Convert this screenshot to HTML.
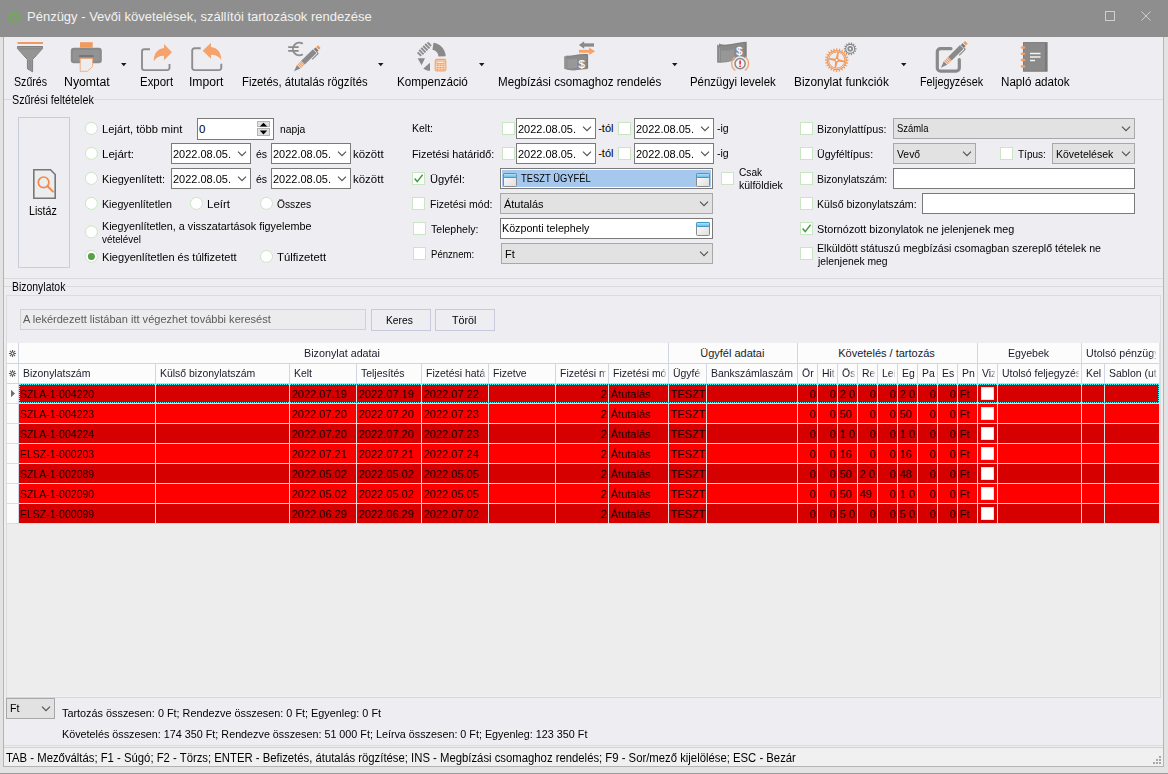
<!DOCTYPE html>
<html><head><meta charset="utf-8"><style>
html,body{margin:0;padding:0;width:1168px;height:774px;overflow:hidden;background:#eeeef2;}
body{position:relative;font-family:"Liberation Sans", sans-serif;}
.t{position:absolute;white-space:nowrap;font-family:"Liberation Sans", sans-serif;}
</style></head><body>
<div style="position:absolute;left:0px;top:0px;width:1168px;height:774px;background:#e3e3e3"></div>
<div style="position:absolute;left:0px;top:0px;width:1168px;height:37px;background:#8e8e8e"></div>
<div style="position:absolute;left:3px;top:37px;width:1161px;height:730px;background:#b4b4b4"></div>
<div style="position:absolute;left:4px;top:37px;width:1159px;height:729px;background:#eeeef2"></div>
<div style="position:absolute;left:0px;top:773px;width:1168px;height:1px;background:#9a9a9a"></div>
<svg style="position:absolute;left:4px;top:6px" width="24" height="22" viewBox="4 6 24 22"><g fill="#6cb04a"><circle cx="12.7" cy="11.4" r="0.95"/><circle cx="15.7" cy="11.4" r="0.95"/><circle cx="8.1" cy="18.5" r="1"/><circle cx="20.1" cy="18.5" r="1"/><circle cx="9.5" cy="21.3" r="0.95"/><circle cx="18.6" cy="21.3" r="0.95"/></g><g stroke="#6cb04a" stroke-width="1.3" fill="none" stroke-linecap="round"><path d="M9.8 13.3Q14.2 16.8 18.5 13.2"/><path d="M8.4 15.4Q12.4 16.6 12.4 19.5V22.3"/><path d="M19.8 15.4Q15.6 16.6 15.6 19.5V22.3"/></g></svg>
<div class="t" style="left:27px;top:8.50px;font-size:13px;line-height:16px;color:#f2f2f2;transform:scaleX(1.0);transform-origin:0 0;">Pénzügy - Vevői követelések, szállítói tartozások rendezése</div>
<div style="position:absolute;left:1105px;top:11px;width:10px;height:10px;border:1px solid #cfcfcf;box-sizing:border-box"></div>
<svg style="position:absolute;left:1141px;top:11px" width="10" height="10"><path d="M0.5 0.5L9.5 9.5M9.5 0.5L0.5 9.5" stroke="#cfcfcf" stroke-width="1"/></svg>
<svg style="position:absolute;left:0px;top:36px" width="60" height="40" viewBox="0 36 60 40"><rect x="17.5" y="42" width="25.5" height="2" fill="#f09a5e"/>
<path d="M17.5 46.5H42.5V48.6L32.6 59.5V71.8L27.4 68.8V59.5L17.5 48.6Z" fill="#959595" stroke="#808080" stroke-width="1"/>
<path d="M19 48.8H41" stroke="#858585" stroke-width="0.9"/><path d="M30 60V69.5" stroke="#858585" stroke-width="0.8"/></svg>
<div class="t" style="left:14.2px;top:74.84px;font-size:12px;line-height:14px;color:#000;transform:scaleX(0.8838);transform-origin:0 0;">Szűrés</div>
<svg style="position:absolute;left:60px;top:36px" width="60" height="40" viewBox="60 36 60 40"><rect x="80" y="42.2" width="12.7" height="5.4" fill="#f09a5e"/>
<rect x="70.8" y="47.8" width="31" height="15.4" rx="3" fill="#8a8a8a"/>
<rect x="73" y="50" width="26.5" height="11" rx="1.5" fill="#939393"/>
<rect x="79" y="55" width="14.5" height="2" fill="#777"/>
<path d="M80.2 58.4H92.6V66.5L87.4 71.3H80.2Z" fill="#ededf0" stroke="#f2a474" stroke-width="0.85"/></svg>
<div class="t" style="left:63.7px;top:74.84px;font-size:12px;line-height:14px;color:#000;transform:scaleX(1.0244);transform-origin:0 0;">Nyomtat</div>
<svg style="position:absolute;left:121px;top:63px" width="6" height="4" viewBox="0 0 6 4"><path d="M0 0H5.5L2.75 3.2Z" fill="#1a1a1a"/></svg>
<svg style="position:absolute;left:130px;top:36px" width="50" height="40" viewBox="130 36 50 40"><path d="M150 49.3H144.3A2.3 2.3 0 0 0 142 51.6V67.8A2.3 2.3 0 0 0 144.3 70.1H167.2A2.3 2.3 0 0 0 169.5 67.8V64" fill="none" stroke="#8e8e8e" stroke-width="1.9"/>
<path d="M153.8 61.3C153.8 53.5 157.5 48.6 164 48V44L172 52.3L164 60.3V55.8C159.5 55.8 156.3 57.5 153.8 61.3Z" fill="#f5a36a"/></svg>
<div class="t" style="left:139.5px;top:74.84px;font-size:12px;line-height:14px;color:#000;transform:scaleX(0.9543);transform-origin:0 0;">Export</div>
<svg style="position:absolute;left:180px;top:36px" width="50" height="40" viewBox="180 36 50 40"><path d="M200.7 48.3H194.5A2.3 2.3 0 0 0 192.2 50.6V67.8A2.3 2.3 0 0 0 194.5 70.1H219A2.3 2.3 0 0 0 221.3 67.8V63.7" fill="none" stroke="#8e8e8e" stroke-width="1.9"/>
<path d="M221.3 60C221.3 52.5 217.5 47.6 211 47V42.8L202.7 50.8L211 58.8V54.8C215.5 54.8 218.8 56.4 221.3 60Z" fill="#f5a36a"/></svg>
<div class="t" style="left:189.4px;top:74.84px;font-size:12px;line-height:14px;color:#000;transform:scaleX(1.0114);transform-origin:0 0;">Import</div>
<svg style="position:absolute;left:280px;top:36px" width="50" height="40" viewBox="280 36 50 40"><path d="M302.8 43.8A6.3 6.3 0 1 0 302.8 54.2" fill="none" stroke="#8e8e8e" stroke-width="1.9"/>
<path d="M288.2 47.1H298.7M288.2 50.9H298.7" stroke="#8a8a8a" stroke-width="1.9"/><path d="M294.00 71.30L296.95 64.94L300.44 68.53Z" fill="#8a8a8a"/><path d="M297.45 64.32L298.31 63.49L301.93 67.22L301.08 68.05Z" fill="#f09a5e"/><path d="M298.73 63.07L299.59 62.24L303.21 65.97L302.36 66.80Z" fill="#f09a5e"/><path d="M300.01 61.83L300.87 61.00L304.49 64.73L303.64 65.56Z" fill="#f09a5e"/><path d="M301.15 60.72L312.96 49.25L316.59 52.97L304.78 64.45Z" fill="#8a8a8a"/><path d="M313.81 49.12L315.59 47.39L318.51 50.40L316.74 52.13Z" fill="#7a7a7a"/><path d="M316.15 47.12L318.00 45.32L320.65 48.05L318.80 49.85Z" fill="#f09a5e"/><path d="M312.15 59.37L317.84 53.84L317.51 52.08" fill="none" stroke="#8a8a8a" stroke-width="1.2"/></svg>
<div class="t" style="left:241.5px;top:74.84px;font-size:12px;line-height:14px;color:#000;transform:scaleX(0.9421);transform-origin:0 0;">Fizetés, átutalás rögzítés</div>
<svg style="position:absolute;left:378px;top:63px" width="6" height="4" viewBox="0 0 6 4"><path d="M0 0H5.5L2.75 3.2Z" fill="#1a1a1a"/></svg>
<svg style="position:absolute;left:410px;top:36px" width="50" height="40" viewBox="410 36 50 40"><g transform="translate(0.6 0.6) rotate(-45 423.8 48.5)"><rect x="415.80" y="46.0" width="1.9" height="5.0" fill="#8c8c8c"/><rect x="418.60" y="45.4" width="1.9" height="6.2" fill="#8c8c8c"/><rect x="421.40" y="45.4" width="1.9" height="6.2" fill="#8c8c8c"/><rect x="424.20" y="45.4" width="1.9" height="6.2" fill="#8c8c8c"/><rect x="427.00" y="45.4" width="1.9" height="6.2" fill="#8c8c8c"/><rect x="429.80" y="46.0" width="1.9" height="5.0" fill="#8c8c8c"/></g>
<path d="M433.48 42.64A14.2 14.2 0 0 1 445.69 56.20L438.50 56.46A7.0 7.0 0 0 0 432.47 49.77Z" fill="#8a8a8a"/>
<path d="M417.6 58.2H425L421.6 65.2Z" fill="#8a8a8a"/>
<path d="M430 62.8V70.8C427.5 70.6 425.3 69.8 423.3 68.4Z" fill="#8a8a8a"/>
<rect x="435.2" y="59.4" width="10.6" height="11.6" rx="1.6" fill="#fbd9c0" stroke="#f4a36c" stroke-width="1.1"/>
<rect x="436.9" y="61.1" width="7.2" height="2.4" fill="#fdeee2" stroke="#f4a36c" stroke-width="0.9"/>
<g fill="#f39a5c"><rect x="436.6" y="64.6" width="2" height="1.3"/><rect x="439.5" y="64.6" width="2" height="1.3"/><rect x="442.4" y="64.6" width="2" height="1.3"/>
<rect x="436.6" y="67" width="2" height="1.3"/><rect x="439.5" y="67" width="2" height="1.3"/><rect x="442.4" y="67" width="2" height="1.3"/>
<rect x="436.6" y="69.2" width="2" height="1.1"/><rect x="439.5" y="69.2" width="2" height="1.1"/><rect x="442.4" y="69.2" width="2" height="1.1"/></g></svg>
<div class="t" style="left:396.6px;top:74.84px;font-size:12px;line-height:14px;color:#000;transform:scaleX(0.974);transform-origin:0 0;">Kompenzáció</div>
<svg style="position:absolute;left:479px;top:63px" width="6" height="4" viewBox="0 0 6 4"><path d="M0 0H5.5L2.75 3.2Z" fill="#1a1a1a"/></svg>
<svg style="position:absolute;left:555px;top:36px" width="50" height="40" viewBox="555 36 50 40"><path d="M594 45H583" stroke="#8a8a8a" stroke-width="3.3"/><path d="M584.2 41.3L578.9 45L584.2 48.7Z" fill="#8a8a8a"/>
<path d="M579 51.3H590" stroke="#f5a36a" stroke-width="2.9"/><path d="M589.2 47.5L595.1 51.3L589.2 55Z" fill="#f5a36a"/>
<path d="M566 55.5C571 57 577 53.2 588.1 54.3V68.8C581 68.2 575 71.3 566 69Z" fill="#7e7e7e"/>
<path d="M564.2 56C569 57.8 576 54.2 586.5 55.5V69.4C579 68.8 574 72.5 564.2 68.8Z" fill="#8a8a8a"/>
<path d="M567.5 59C571 59.8 574 58.8 577 58.5V67.5C574 67.8 571 69 567.5 68Z" fill="#989898"/>
<path d="M566 58.5V68.5" stroke="#a0a0a0" stroke-width="0.8"/>
<text x="581.6" y="67.6" font-family="Liberation Sans" font-size="11.5" fill="#fff" stroke="#fff" stroke-width="0.2" text-anchor="middle">$</text></svg>
<div class="t" style="left:497.7px;top:74.84px;font-size:12px;line-height:14px;color:#000;transform:scaleX(0.9675);transform-origin:0 0;">Megbízási csomaghoz rendelés</div>
<svg style="position:absolute;left:672px;top:63px" width="6" height="4" viewBox="0 0 6 4"><path d="M0 0H5.5L2.75 3.2Z" fill="#1a1a1a"/></svg>
<svg style="position:absolute;left:710px;top:36px" width="50" height="40" viewBox="710 36 50 40"><path d="M719 43.5C725 46.5 733 43 746.7 41.8V57.5C736 58 727 62 719 61Z" fill="#7e7e7e"/>
<path d="M717.1 44.5C723 48 731 44.5 744.6 43.2V59C734 59.5 726 63.8 717.1 62.5Z" fill="#8a8a8a"/>
<path d="M721 50C726 51.5 730 50 734 49.2V60C730 60.5 726 62 721 61.5Z" fill="#979797"/>
<path d="M719.5 48V61" stroke="#a2a2a2" stroke-width="0.8"/>
<text x="739.2" y="55.2" font-family="Liberation Sans" font-size="11" fill="#fff" stroke="#fff" stroke-width="0.3" text-anchor="middle">$</text>
<circle cx="740.1" cy="63.6" r="7.3" fill="#eeeef2"/>
<path d="M744.9 56.7A8.4 8.4 0 0 1 744.9 70.5M735.3 70.5A8.4 8.4 0 0 1 735.3 56.7" fill="none" stroke="#f5a36a" stroke-width="1.3"/>
<circle cx="740.1" cy="63.6" r="5.1" fill="#f2f2f4" stroke="#8a8a8a" stroke-width="1.5"/>
<path d="M740.1 60.4V64.6" stroke="#e0203a" stroke-width="1.5"/><rect x="739.35" y="65.6" width="1.5" height="1.4" fill="#e0203a"/></svg>
<div class="t" style="left:690.4px;top:74.84px;font-size:12px;line-height:14px;color:#000;transform:scaleX(0.9516);transform-origin:0 0;">Pénzügyi levelek</div>
<svg style="position:absolute;left:820px;top:36px" width="50" height="40" viewBox="820 36 50 40"><path d="M848.48 59.48L848.48 60.72L846.67 60.88L846.48 62.18L848.24 62.55L847.92 63.75L846.13 63.44L845.61 64.64L847.21 65.46L846.60 66.53L844.94 65.76L844.13 66.79L845.47 68.00L844.60 68.87L843.19 67.70L842.15 68.49L843.13 70.00L842.06 70.61L841.01 69.13L839.79 69.61L840.35 71.32L839.15 71.64L838.52 69.93L837.22 70.09L837.32 71.88L836.08 71.88L835.92 70.07L834.62 69.88L834.25 71.64L833.05 71.32L833.36 69.53L832.16 69.01L831.34 70.61L830.27 70.00L831.04 68.34L830.01 67.53L828.80 68.87L827.93 68.00L829.10 66.59L828.31 65.55L826.80 66.53L826.19 65.46L827.67 64.41L827.19 63.19L825.48 63.75L825.16 62.55L826.87 61.92L826.71 60.62L824.92 60.72L824.92 59.48L826.73 59.32L826.92 58.02L825.16 57.65L825.48 56.45L827.27 56.76L827.79 55.56L826.19 54.74L826.80 53.67L828.46 54.44L829.27 53.41L827.93 52.20L828.80 51.33L830.21 52.50L831.25 51.71L830.27 50.20L831.34 49.59L832.39 51.07L833.61 50.59L833.05 48.88L834.25 48.56L834.88 50.27L836.18 50.11L836.08 48.32L837.32 48.32L837.48 50.13L838.78 50.32L839.15 48.56L840.35 48.88L840.04 50.67L841.24 51.19L842.06 49.59L843.13 50.20L842.36 51.86L843.39 52.67L844.60 51.33L845.47 52.20L844.30 53.61L845.09 54.65L846.60 53.67L847.21 54.74L845.73 55.79L846.21 57.01L847.92 56.45L848.24 57.65L846.53 58.28L846.69 59.58Z" fill="#f09a5e"/>
<circle cx="836.7" cy="60.1" r="8.9" fill="#eeeef2"/>
<circle cx="836.7" cy="60.1" r="8.1" fill="none" stroke="#f09a5e" stroke-width="1"/>
<path d="M-1.3 -1 L-0.7 -8 L0.7 -8 L1.3 -1Z" fill="#f09a5e" transform="translate(836.7 60.1) rotate(10)"/><path d="M-1.3 -1 L-0.7 -8 L0.7 -8 L1.3 -1Z" fill="#f09a5e" transform="translate(836.7 60.1) rotate(100)"/><path d="M-1.3 -1 L-0.7 -8 L0.7 -8 L1.3 -1Z" fill="#f09a5e" transform="translate(836.7 60.1) rotate(190)"/><path d="M-1.3 -1 L-0.7 -8 L0.7 -8 L1.3 -1Z" fill="#f09a5e" transform="translate(836.7 60.1) rotate(280)"/><circle cx="836.7" cy="60.1" r="2.2" fill="#f09a5e"/>
<circle cx="836.7" cy="60.1" r="1.1" fill="#fff"/>
<path d="M856.57 48.20L856.57 49.40L855.16 49.45L854.89 50.54L856.20 51.02L855.68 52.11L854.39 51.54L853.67 52.40L854.64 53.41L853.70 54.16L852.78 53.08L851.77 53.55L852.21 54.88L851.03 55.15L850.67 53.78L849.55 53.76L849.37 55.15L848.19 54.88L848.46 53.49L847.46 52.99L846.70 54.16L845.76 53.41L846.60 52.27L845.92 51.38L844.72 52.11L844.20 51.02L845.45 50.37L845.22 49.27L843.83 49.40L843.83 48.20L845.24 48.15L845.51 47.06L844.20 46.58L844.72 45.49L846.01 46.06L846.73 45.20L845.76 44.19L846.70 43.44L847.62 44.52L848.63 44.05L848.19 42.72L849.37 42.45L849.73 43.82L850.85 43.84L851.03 42.45L852.21 42.72L851.94 44.11L852.94 44.61L853.70 43.44L854.64 44.19L853.80 45.33L854.48 46.22L855.68 45.49L856.20 46.58L854.95 47.23L855.18 48.33Z" fill="#8a8a8a"/>
<circle cx="850.2" cy="48.8" r="3.9" fill="#eeeef2"/><circle cx="850.2" cy="48.8" r="2.8" fill="#8a8a8a"/><rect x="849.3" y="47.9" width="1.8" height="1.8" fill="#fff"/></svg>
<div class="t" style="left:793.9px;top:74.84px;font-size:12px;line-height:14px;color:#000;transform:scaleX(0.9876);transform-origin:0 0;">Bizonylat funkciók</div>
<svg style="position:absolute;left:901px;top:63px" width="6" height="4" viewBox="0 0 6 4"><path d="M0 0H5.5L2.75 3.2Z" fill="#1a1a1a"/></svg>
<svg style="position:absolute;left:925px;top:36px" width="50" height="40" viewBox="925 36 50 40"><path d="M951 48.7H940.5A3.2 3.2 0 0 0 937.3 51.9V67.9A3.2 3.2 0 0 0 940.5 71.1H956.1A3.2 3.2 0 0 0 959.3 67.9V59.6" fill="none" stroke="#8a8a8a" stroke-width="3.2" stroke-linecap="round"/><path d="M940.80 67.70L943.79 61.23L947.31 64.78Z" fill="#8a8a8a"/><path d="M944.30 60.59L945.16 59.73L948.82 63.43L947.96 64.28Z" fill="#f09a5e"/><path d="M945.60 59.31L946.46 58.45L950.12 62.15L949.25 63.00Z" fill="#f09a5e"/><path d="M946.89 58.02L947.76 57.17L951.41 60.87L950.55 61.72Z" fill="#f09a5e"/><path d="M948.04 56.89L960.00 45.08L963.65 48.78L951.70 60.59Z" fill="#8a8a8a"/><path d="M960.85 44.93L962.65 43.16L965.60 46.14L963.80 47.92Z" fill="#7a7a7a"/><path d="M963.22 42.87L965.10 41.02L967.77 43.72L965.90 45.57Z" fill="#f09a5e"/><path d="M959.16 55.32L964.92 49.63L964.59 47.85" fill="none" stroke="#8a8a8a" stroke-width="1.2"/></svg>
<div class="t" style="left:919.5px;top:74.84px;font-size:12px;line-height:14px;color:#000;transform:scaleX(0.9014);transform-origin:0 0;">Feljegyzések</div>
<svg style="position:absolute;left:1015px;top:36px" width="40" height="40" viewBox="1015 36 40 40"><rect x="1023.5" y="42.6" width="23.6" height="28.6" fill="#8a8a8a" stroke="#7c7c7c" stroke-width="1"/>
<rect x="1045" y="43" width="1.6" height="28" fill="#777"/>
<path d="M1030 53.5H1040.5M1030 57H1040.5M1030 60.5H1035" stroke="#f4f4f4" stroke-width="1.4"/>
<g fill="#f6a060"><ellipse cx="1023" cy="47.6" rx="2.4" ry="1.3"/><ellipse cx="1023" cy="53.8" rx="2.4" ry="1.3"/><ellipse cx="1023" cy="60.1" rx="2.4" ry="1.3"/><ellipse cx="1023" cy="66.4" rx="2.4" ry="1.3"/></g></svg>
<div class="t" style="left:1001.0px;top:74.84px;font-size:12px;line-height:14px;color:#000;transform:scaleX(0.9694);transform-origin:0 0;">Napló adatok</div>
<div style="position:absolute;left:4px;top:99px;width:1159px;height:1px;background:#dadada"></div>
<div class="t" style="left:11.6px;top:92.84px;font-size:12px;line-height:14px;color:#000;transform:scaleX(0.8946);transform-origin:0 0;background:#eeeef2;">Szűrési feltételek</div>
<div style="position:absolute;left:18px;top:117px;width:52px;height:151px;border:1px solid #c9cddb;box-sizing:border-box"></div>
<svg style="position:absolute;left:30px;top:166px" width="30" height="36" viewBox="30 166 30 36">
<path d="M33.8 169.8H50.5L55.2 174.5V198.2H33.8Z" fill="#ededf0" stroke="#777" stroke-width="1.6"/>
<circle cx="43.6" cy="182.3" r="5.3" fill="none" stroke="#f08a4b" stroke-width="1.7"/>
<path d="M47.6 186.3L53 191.6" stroke="#f08a4b" stroke-width="2" stroke-linecap="round"/>
</svg>
<div class="t" style="left:29.3px;top:203.84px;font-size:12px;line-height:14px;color:#000;transform:scaleX(0.8871);transform-origin:0 0;">Listáz</div>
<svg style="position:absolute;left:84px;top:121px" width="14" height="14" viewBox="0 0 14 14"><circle cx="7.40" cy="7.40" r="6" fill="#fff" stroke="#c9e5c3" stroke-width="1"/></svg>
<svg style="position:absolute;left:84px;top:146px" width="14" height="14" viewBox="0 0 14 14"><circle cx="7.40" cy="7.40" r="6" fill="#fff" stroke="#c9e5c3" stroke-width="1"/></svg>
<svg style="position:absolute;left:84px;top:171px" width="14" height="14" viewBox="0 0 14 14"><circle cx="7.40" cy="7.40" r="6" fill="#fff" stroke="#c9e5c3" stroke-width="1"/></svg>
<svg style="position:absolute;left:84px;top:196px" width="14" height="14" viewBox="0 0 14 14"><circle cx="7.40" cy="7.40" r="6" fill="#fff" stroke="#c9e5c3" stroke-width="1"/></svg>
<svg style="position:absolute;left:84px;top:224px" width="14" height="14" viewBox="0 0 14 14"><circle cx="7.40" cy="7.90" r="6" fill="#fff" stroke="#c9e5c3" stroke-width="1"/></svg>
<svg style="position:absolute;left:84px;top:249px" width="14" height="14" viewBox="0 0 14 14"><circle cx="7.40" cy="7.40" r="6" fill="#fff" stroke="#c9e5c3" stroke-width="1"/><circle cx="7.40" cy="7.40" r="3.5" fill="#55a247"/></svg>
<div class="t" style="left:102.3px;top:122.69px;font-size:11px;line-height:13px;color:#000;transform:scaleX(1.0177);transform-origin:0 0;">Lejárt, több mint</div>
<div class="t" style="left:102.3px;top:147.69px;font-size:11px;line-height:13px;color:#000;transform:scaleX(1.0484);transform-origin:0 0;">Lejárt:</div>
<div class="t" style="left:102.3px;top:172.69px;font-size:11px;line-height:13px;color:#000;transform:scaleX(0.9922);transform-origin:0 0;">Kiegyenlített:</div>
<div class="t" style="left:102.3px;top:197.69px;font-size:11px;line-height:13px;color:#000;transform:scaleX(0.9681);transform-origin:0 0;">Kiegyenlítetlen</div>
<div class="t" style="left:102.3px;top:219.69px;font-size:11px;line-height:13px;color:#000;transform:scaleX(0.9813);transform-origin:0 0;">Kiegyenlítetlen, a visszatartások figyelembe</div>
<div class="t" style="left:102.3px;top:232.69px;font-size:11px;line-height:13px;color:#000;transform:scaleX(0.8953);transform-origin:0 0;">vételével</div>
<div class="t" style="left:102.3px;top:250.69px;font-size:11px;line-height:13px;color:#000;transform:scaleX(1.0052);transform-origin:0 0;">Kiegyenlítetlen és túlfizetett</div>
<svg style="position:absolute;left:189px;top:196px" width="14" height="14" viewBox="0 0 14 14"><circle cx="7.40" cy="7.40" r="6" fill="#fff" stroke="#c9e5c3" stroke-width="1"/></svg>
<div class="t" style="left:207.4px;top:197.69px;font-size:11px;line-height:13px;color:#000;transform:scaleX(1.0455);transform-origin:0 0;">Leírt</div>
<svg style="position:absolute;left:259px;top:196px" width="14" height="14" viewBox="0 0 14 14"><circle cx="7.50" cy="7.40" r="6" fill="#fff" stroke="#c9e5c3" stroke-width="1"/></svg>
<div class="t" style="left:277.1px;top:197.69px;font-size:11px;line-height:13px;color:#000;transform:scaleX(0.9324);transform-origin:0 0;">Összes</div>
<svg style="position:absolute;left:259px;top:249px" width="14" height="14" viewBox="0 0 14 14"><circle cx="7.50" cy="7.40" r="6" fill="#fff" stroke="#c9e5c3" stroke-width="1"/></svg>
<div class="t" style="left:277.1px;top:250.69px;font-size:11px;line-height:13px;color:#000;transform:scaleX(1.0292);transform-origin:0 0;">Túlfizetett</div>
<div style="position:absolute;left:197px;top:118px;width:77px;height:22px;background:#fff;border:1px solid #7a7a7a;box-sizing:border-box"></div>
<div class="t" style="left:199px;top:122.02px;font-size:11.5px;line-height:14px;color:#000;">0</div>
<svg style="position:absolute;left:256px;top:120px" width="16" height="18" viewBox="256 120 16 18">
<rect x="257.5" y="121.5" width="12" height="5" fill="#e1e1e1" stroke="#b4b4b4" stroke-width="1"/>
<rect x="257.5" y="128.5" width="12" height="7" fill="#e1e1e1" stroke="#b4b4b4" stroke-width="1"/>
<path d="M259.8 126.6H267.2L263.5 122.8Z" fill="#000"/>
<path d="M259.8 130.6H267.2L263.5 134.4Z" fill="#000"/>
</svg>
<div class="t" style="left:279.7px;top:122.69px;font-size:11px;line-height:13px;color:#000;transform:scaleX(0.9393);transform-origin:0 0;">napja</div>
<div style="position:absolute;left:171px;top:143px;width:80px;height:21px;background:#fff;border:1px solid #7a7a7a;box-sizing:border-box"></div>
<div class="t" style="left:173.3px;top:147.02px;font-size:11.5px;line-height:14px;color:#000;transform:scaleX(0.9541);transform-origin:0 0;">2022.08.05.</div>
<svg style="position:absolute;left:237px;top:150px" width="10" height="8" viewBox="0 0 10 8"><path d="M1 1.6L5 5.6L9 1.6" fill="none" stroke="#505050" stroke-width="1.1"/></svg>
<div style="position:absolute;left:271px;top:143px;width:80px;height:21px;background:#fff;border:1px solid #7a7a7a;box-sizing:border-box"></div>
<div class="t" style="left:273.3px;top:147.02px;font-size:11.5px;line-height:14px;color:#000;transform:scaleX(0.9541);transform-origin:0 0;">2022.08.05.</div>
<svg style="position:absolute;left:337px;top:150px" width="10" height="8" viewBox="0 0 10 8"><path d="M1 1.6L5 5.6L9 1.6" fill="none" stroke="#505050" stroke-width="1.1"/></svg>
<div style="position:absolute;left:171px;top:168px;width:80px;height:21px;background:#fff;border:1px solid #7a7a7a;box-sizing:border-box"></div>
<div class="t" style="left:173.3px;top:172.02px;font-size:11.5px;line-height:14px;color:#000;transform:scaleX(0.9541);transform-origin:0 0;">2022.08.05.</div>
<svg style="position:absolute;left:237px;top:175px" width="10" height="8" viewBox="0 0 10 8"><path d="M1 1.6L5 5.6L9 1.6" fill="none" stroke="#505050" stroke-width="1.1"/></svg>
<div style="position:absolute;left:271px;top:168px;width:80px;height:21px;background:#fff;border:1px solid #7a7a7a;box-sizing:border-box"></div>
<div class="t" style="left:273.3px;top:172.02px;font-size:11.5px;line-height:14px;color:#000;transform:scaleX(0.9541);transform-origin:0 0;">2022.08.05.</div>
<svg style="position:absolute;left:337px;top:175px" width="10" height="8" viewBox="0 0 10 8"><path d="M1 1.6L5 5.6L9 1.6" fill="none" stroke="#505050" stroke-width="1.1"/></svg>
<div class="t" style="left:255.5px;top:147.69px;font-size:11px;line-height:13px;color:#000;transform:scaleX(0.9583);transform-origin:0 0;">és</div>
<div class="t" style="left:255.5px;top:172.69px;font-size:11px;line-height:13px;color:#000;transform:scaleX(0.9583);transform-origin:0 0;">és</div>
<div class="t" style="left:353.4px;top:147.69px;font-size:11px;line-height:13px;color:#000;transform:scaleX(1.0414);transform-origin:0 0;">között</div>
<div class="t" style="left:353.4px;top:172.69px;font-size:11px;line-height:13px;color:#000;transform:scaleX(1.0414);transform-origin:0 0;">között</div>
<div class="t" style="left:411.5px;top:121.69px;font-size:11px;line-height:13px;color:#000;transform:scaleX(0.9545);transform-origin:0 0;">Kelt:</div>
<div class="t" style="left:411.5px;top:147.69px;font-size:11px;line-height:13px;color:#000;transform:scaleX(0.9821);transform-origin:0 0;">Fizetési határidő:</div>
<svg style="position:absolute;left:502px;top:122px" width="13" height="13" viewBox="0 0 13 13"><rect x="0.5" y="0.5" width="12" height="12" fill="#fff" stroke="#c9e5c3" stroke-width="1"/></svg>
<svg style="position:absolute;left:502px;top:147px" width="13" height="13" viewBox="0 0 13 13"><rect x="0.5" y="0.5" width="12" height="12" fill="#fff" stroke="#c9e5c3" stroke-width="1"/></svg>
<div style="position:absolute;left:516px;top:118px;width:80px;height:21px;background:#fff;border:1px solid #7a7a7a;box-sizing:border-box"></div>
<div class="t" style="left:518.3px;top:122.02px;font-size:11.5px;line-height:14px;color:#000;transform:scaleX(0.9541);transform-origin:0 0;">2022.08.05.</div>
<svg style="position:absolute;left:582px;top:125px" width="10" height="8" viewBox="0 0 10 8"><path d="M1 1.6L5 5.6L9 1.6" fill="none" stroke="#505050" stroke-width="1.1"/></svg>
<div style="position:absolute;left:516px;top:143px;width:80px;height:21px;background:#fff;border:1px solid #7a7a7a;box-sizing:border-box"></div>
<div class="t" style="left:518.3px;top:147.02px;font-size:11.5px;line-height:14px;color:#000;transform:scaleX(0.9541);transform-origin:0 0;">2022.08.05.</div>
<svg style="position:absolute;left:582px;top:150px" width="10" height="8" viewBox="0 0 10 8"><path d="M1 1.6L5 5.6L9 1.6" fill="none" stroke="#505050" stroke-width="1.1"/></svg>
<div class="t" style="left:598.2px;top:121.69px;font-size:11px;line-height:13px;color:#000;transform:scaleX(1.0);transform-origin:0 0;">-tól</div>
<div class="t" style="left:598.2px;top:146.69px;font-size:11px;line-height:13px;color:#000;transform:scaleX(1.0);transform-origin:0 0;">-tól</div>
<svg style="position:absolute;left:618px;top:122px" width="13" height="13" viewBox="0 0 13 13"><rect x="0.5" y="0.5" width="12" height="12" fill="#fff" stroke="#c9e5c3" stroke-width="1"/></svg>
<svg style="position:absolute;left:618px;top:147px" width="13" height="13" viewBox="0 0 13 13"><rect x="0.5" y="0.5" width="12" height="12" fill="#fff" stroke="#c9e5c3" stroke-width="1"/></svg>
<div style="position:absolute;left:634px;top:118px;width:80px;height:21px;background:#fff;border:1px solid #7a7a7a;box-sizing:border-box"></div>
<div class="t" style="left:636.3px;top:122.02px;font-size:11.5px;line-height:14px;color:#000;transform:scaleX(0.9541);transform-origin:0 0;">2022.08.05.</div>
<svg style="position:absolute;left:700px;top:125px" width="10" height="8" viewBox="0 0 10 8"><path d="M1 1.6L5 5.6L9 1.6" fill="none" stroke="#505050" stroke-width="1.1"/></svg>
<div style="position:absolute;left:634px;top:143px;width:80px;height:21px;background:#fff;border:1px solid #7a7a7a;box-sizing:border-box"></div>
<div class="t" style="left:636.3px;top:147.02px;font-size:11.5px;line-height:14px;color:#000;transform:scaleX(0.9541);transform-origin:0 0;">2022.08.05.</div>
<svg style="position:absolute;left:700px;top:150px" width="10" height="8" viewBox="0 0 10 8"><path d="M1 1.6L5 5.6L9 1.6" fill="none" stroke="#505050" stroke-width="1.1"/></svg>
<div class="t" style="left:717.0px;top:121.69px;font-size:11px;line-height:13px;color:#000;transform:scaleX(0.9583);transform-origin:0 0;">-ig</div>
<div class="t" style="left:717.0px;top:146.69px;font-size:11px;line-height:13px;color:#000;transform:scaleX(0.9583);transform-origin:0 0;">-ig</div>
<svg style="position:absolute;left:412px;top:172px" width="13" height="13" viewBox="0 0 13 13"><rect x="0.5" y="0.5" width="12" height="12" fill="#fff" stroke="#c9e5c3" stroke-width="1"/><path d="M2.6 6.6L5.2 9.6L10.6 2.8" fill="none" stroke="#3f9f3f" stroke-width="1.5"/></svg>
<div class="t" style="left:429.5px;top:172.69px;font-size:11px;line-height:13px;color:#000;transform:scaleX(1.0147);transform-origin:0 0;">Ügyfél:</div>
<div style="position:absolute;left:500px;top:168px;width:213px;height:21px;background:#fff;border:1px solid #7a7a7a;box-sizing:border-box"></div>
<div style="position:absolute;left:502px;top:170px;width:209px;height:17px;background:#a6c8ee"></div>
<svg style="position:absolute;left:503px;top:173px" width="14" height="14" viewBox="0 0 14 14">
<defs><linearGradient id="wg503" x1="0" y1="0" x2="1" y2="1"><stop offset="0" stop-color="#ffffff"/><stop offset="1" stop-color="#dedede"/></linearGradient>
<linearGradient id="wt503" x1="0" y1="0" x2="0" y2="1"><stop offset="0" stop-color="#bfe8fb"/><stop offset="1" stop-color="#62b6e6"/></linearGradient></defs>
<rect x="0.5" y="0.5" width="13" height="13" rx="1" fill="url(#wg503)" stroke="#8a8a8a" stroke-width="1"/>
<rect x="0.5" y="0.5" width="13" height="4" rx="1" fill="url(#wt503)" stroke="#3e9ac7" stroke-width="1"/>
</svg>
<div class="t" style="left:520.5px;top:171.69px;font-size:11px;line-height:13px;color:#000;transform:scaleX(0.8537);transform-origin:0 0;">TESZT ÜGYFÉL</div>
<svg style="position:absolute;left:696px;top:173px" width="14" height="14" viewBox="0 0 14 14">
<defs><linearGradient id="wg696" x1="0" y1="0" x2="1" y2="1"><stop offset="0" stop-color="#ffffff"/><stop offset="1" stop-color="#dedede"/></linearGradient>
<linearGradient id="wt696" x1="0" y1="0" x2="0" y2="1"><stop offset="0" stop-color="#bfe8fb"/><stop offset="1" stop-color="#62b6e6"/></linearGradient></defs>
<rect x="0.5" y="0.5" width="13" height="13" rx="1" fill="url(#wg696)" stroke="#8a8a8a" stroke-width="1"/>
<rect x="0.5" y="0.5" width="13" height="4" rx="1" fill="url(#wt696)" stroke="#3e9ac7" stroke-width="1"/>
</svg>
<svg style="position:absolute;left:721px;top:172px" width="13" height="13" viewBox="0 0 13 13"><rect x="0.5" y="0.5" width="12" height="12" fill="#fff" stroke="#c9e5c3" stroke-width="1"/></svg>
<div class="t" style="left:738.6px;top:165.69px;font-size:11px;line-height:13px;color:#000;transform:scaleX(0.9231);transform-origin:0 0;">Csak</div>
<div class="t" style="left:738.6px;top:178.69px;font-size:11px;line-height:13px;color:#000;transform:scaleX(0.9565);transform-origin:0 0;">külföldiek</div>
<svg style="position:absolute;left:412px;top:197px" width="13" height="13" viewBox="0 0 13 13"><rect x="0.5" y="0.5" width="12" height="12" fill="#fff" stroke="#c9e5c3" stroke-width="1"/></svg>
<div class="t" style="left:429.5px;top:197.69px;font-size:11px;line-height:13px;color:#000;transform:scaleX(0.9538);transform-origin:0 0;">Fizetési mód:</div>
<div style="position:absolute;left:500px;top:193px;width:213px;height:21px;background:#e2e2e2;border:1px solid #a8a8a8;box-sizing:border-box"></div>
<div class="t" style="left:503.5px;top:197.02px;font-size:11.5px;line-height:14px;color:#000;transform:scaleX(0.9524);transform-origin:0 0;">Átutalás</div>
<svg style="position:absolute;left:699px;top:200px" width="10" height="8" viewBox="0 0 10 8"><path d="M1 1.6L5 5.6L9 1.6" fill="none" stroke="#505050" stroke-width="1.1"/></svg>
<svg style="position:absolute;left:413px;top:222px" width="13" height="13" viewBox="0 0 13 13"><rect x="0.5" y="0.5" width="12" height="12" fill="#fff" stroke="#c9e5c3" stroke-width="1"/></svg>
<div class="t" style="left:430.8px;top:222.69px;font-size:11px;line-height:13px;color:#000;transform:scaleX(0.96);transform-origin:0 0;">Telephely:</div>
<div style="position:absolute;left:500px;top:218px;width:213px;height:21px;background:#fff;border:1px solid #7a7a7a;box-sizing:border-box"></div>
<div class="t" style="left:502.4px;top:221.69px;font-size:11px;line-height:13px;color:#000;transform:scaleX(0.9722);transform-origin:0 0;">Központi telephely</div>
<svg style="position:absolute;left:696px;top:222px" width="14" height="14" viewBox="0 0 14 14">
<defs><linearGradient id="wg696" x1="0" y1="0" x2="1" y2="1"><stop offset="0" stop-color="#ffffff"/><stop offset="1" stop-color="#dedede"/></linearGradient>
<linearGradient id="wt696" x1="0" y1="0" x2="0" y2="1"><stop offset="0" stop-color="#bfe8fb"/><stop offset="1" stop-color="#62b6e6"/></linearGradient></defs>
<rect x="0.5" y="0.5" width="13" height="13" rx="1" fill="url(#wg696)" stroke="#8a8a8a" stroke-width="1"/>
<rect x="0.5" y="0.5" width="13" height="4" rx="1" fill="url(#wt696)" stroke="#3e9ac7" stroke-width="1"/>
</svg>
<svg style="position:absolute;left:413px;top:247px" width="13" height="13" viewBox="0 0 13 13"><rect x="0.5" y="0.5" width="12" height="12" fill="#fff" stroke="#c9e5c3" stroke-width="1"/></svg>
<div class="t" style="left:430.8px;top:247.69px;font-size:11px;line-height:13px;color:#000;transform:scaleX(0.87);transform-origin:0 0;">Pénznem:</div>
<div style="position:absolute;left:501px;top:243px;width:212px;height:21px;background:#e2e2e2;border:1px solid #a8a8a8;box-sizing:border-box"></div>
<div class="t" style="left:504.5px;top:247.02px;font-size:11.5px;line-height:14px;color:#000;transform:scaleX(0.9545);transform-origin:0 0;">Ft</div>
<svg style="position:absolute;left:699px;top:250px" width="10" height="8" viewBox="0 0 10 8"><path d="M1 1.6L5 5.6L9 1.6" fill="none" stroke="#505050" stroke-width="1.1"/></svg>
<svg style="position:absolute;left:800px;top:122px" width="13" height="13" viewBox="0 0 13 13"><rect x="0.5" y="0.5" width="12" height="12" fill="#fff" stroke="#c9e5c3" stroke-width="1"/></svg>
<svg style="position:absolute;left:800px;top:147px" width="13" height="13" viewBox="0 0 13 13"><rect x="0.5" y="0.5" width="12" height="12" fill="#fff" stroke="#c9e5c3" stroke-width="1"/></svg>
<svg style="position:absolute;left:800px;top:172px" width="13" height="13" viewBox="0 0 13 13"><rect x="0.5" y="0.5" width="12" height="12" fill="#fff" stroke="#c9e5c3" stroke-width="1"/></svg>
<svg style="position:absolute;left:800px;top:197px" width="13" height="13" viewBox="0 0 13 13"><rect x="0.5" y="0.5" width="12" height="12" fill="#fff" stroke="#c9e5c3" stroke-width="1"/></svg>
<svg style="position:absolute;left:800px;top:222px" width="13" height="13" viewBox="0 0 13 13"><rect x="0.5" y="0.5" width="12" height="12" fill="#fff" stroke="#c9e5c3" stroke-width="1"/><path d="M2.6 6.6L5.2 9.6L10.6 2.8" fill="none" stroke="#3f9f3f" stroke-width="1.5"/></svg>
<svg style="position:absolute;left:800px;top:247px" width="13" height="13" viewBox="0 0 13 13"><rect x="0.5" y="0.5" width="12" height="12" fill="#fff" stroke="#c9e5c3" stroke-width="1"/></svg>
<div class="t" style="left:817.4px;top:122.69px;font-size:11px;line-height:13px;color:#000;transform:scaleX(0.9722);transform-origin:0 0;">Bizonylattípus:</div>
<div style="position:absolute;left:893px;top:118px;width:242px;height:21px;background:#e2e2e2;border:1px solid #a8a8a8;box-sizing:border-box"></div>
<div class="t" style="left:896.5px;top:121.02px;font-size:11.5px;line-height:14px;color:#000;transform:scaleX(0.8205);transform-origin:0 0;">Számla</div>
<svg style="position:absolute;left:1121px;top:125px" width="10" height="8" viewBox="0 0 10 8"><path d="M1 1.6L5 5.6L9 1.6" fill="none" stroke="#505050" stroke-width="1.1"/></svg>
<div class="t" style="left:817.4px;top:147.69px;font-size:11px;line-height:13px;color:#000;transform:scaleX(0.9655);transform-origin:0 0;">Ügyféltípus:</div>
<div style="position:absolute;left:893px;top:143px;width:83px;height:21px;background:#e2e2e2;border:1px solid #a8a8a8;box-sizing:border-box"></div>
<div class="t" style="left:896.5px;top:147.02px;font-size:11.5px;line-height:14px;color:#000;transform:scaleX(0.9038);transform-origin:0 0;">Vevő</div>
<svg style="position:absolute;left:962px;top:150px" width="10" height="8" viewBox="0 0 10 8"><path d="M1 1.6L5 5.6L9 1.6" fill="none" stroke="#505050" stroke-width="1.1"/></svg>
<svg style="position:absolute;left:1000px;top:147px" width="13" height="13" viewBox="0 0 13 13"><rect x="0.5" y="0.5" width="12" height="12" fill="#fff" stroke="#c9e5c3" stroke-width="1"/></svg>
<div class="t" style="left:1017.8px;top:147.69px;font-size:11px;line-height:13px;color:#000;transform:scaleX(0.9097);transform-origin:0 0;">Típus:</div>
<div style="position:absolute;left:1052px;top:143px;width:83px;height:21px;background:#e2e2e2;border:1px solid #a8a8a8;box-sizing:border-box"></div>
<div class="t" style="left:1055.5px;top:147.02px;font-size:11.5px;line-height:14px;color:#000;transform:scaleX(0.9141);transform-origin:0 0;">Követelések</div>
<svg style="position:absolute;left:1121px;top:150px" width="10" height="8" viewBox="0 0 10 8"><path d="M1 1.6L5 5.6L9 1.6" fill="none" stroke="#505050" stroke-width="1.1"/></svg>
<div class="t" style="left:817.4px;top:172.69px;font-size:11px;line-height:13px;color:#000;transform:scaleX(0.95);transform-origin:0 0;">Bizonylatszám:</div>
<div style="position:absolute;left:893px;top:168px;width:242px;height:21px;background:#fff;border:1px solid #7a7a7a;box-sizing:border-box"></div>
<div class="t" style="left:817.4px;top:197.69px;font-size:11px;line-height:13px;color:#000;transform:scaleX(0.9641);transform-origin:0 0;">Külső bizonylatszám:</div>
<div style="position:absolute;left:922px;top:193px;width:213px;height:21px;background:#fff;border:1px solid #7a7a7a;box-sizing:border-box"></div>
<div class="t" style="left:817.4px;top:222.69px;font-size:11px;line-height:13px;color:#000;transform:scaleX(0.9841);transform-origin:0 0;">Stornózott bizonylatok ne jelenjenek meg</div>
<div class="t" style="left:817.4px;top:241.69px;font-size:11px;line-height:13px;color:#000;transform:scaleX(0.9634);transform-origin:0 0;">Elküldött státuszú megbízási csomagban szereplő tételek ne</div>
<div class="t" style="left:818.34px;top:254.69px;font-size:11px;line-height:13px;color:#000;transform:scaleX(0.94);transform-origin:0 0;">jelenjenek meg</div>
<div style="position:absolute;left:4px;top:278px;width:1159px;height:1px;background:#dadada"></div>
<div style="position:absolute;left:4px;top:286px;width:1159px;height:1px;background:#dadada"></div>
<div class="t" style="left:11.5px;top:279.84px;font-size:12px;line-height:14px;color:#000;transform:scaleX(0.8694);transform-origin:0 0;background:#eeeef2;">Bizonylatok</div>
<div style="position:absolute;left:6px;top:295px;width:1155px;height:403px;border-left:1px solid #dcdcdc;border-top:1px solid #dcdcdc;border-right:1px solid #dcdcdc;box-sizing:border-box"></div>
<div style="position:absolute;left:20px;top:309px;width:346px;height:21px;background:#ececee;border:1px solid #d2d2d2;box-sizing:border-box"></div>
<div class="t" style="left:22.8px;top:312.69px;font-size:11px;line-height:13px;color:#5a5a5a;transform:scaleX(1.0032);transform-origin:0 0;">A lekérdezett listában itt végezhet további keresést</div>
<div style="position:absolute;left:371px;top:309px;width:60px;height:22px;background:#eeeef2;border:1px solid #c6cadb;box-sizing:border-box"></div>
<div class="t" style="left:386.2px;top:313.69px;font-size:11px;line-height:13px;color:#000;transform:scaleX(0.931);transform-origin:0 0;">Keres</div>
<div style="position:absolute;left:435px;top:309px;width:60px;height:22px;background:#eeeef2;border:1px solid #c6cadb;box-sizing:border-box"></div>
<div class="t" style="left:452.2px;top:313.69px;font-size:11px;line-height:13px;color:#000;transform:scaleX(0.972);transform-origin:0 0;">Töröl</div>
<div style="position:absolute;left:7px;top:343px;width:1153px;height:354px;background:#ededed"></div>
<div style="position:absolute;left:7px;top:696px;width:1153px;height:1px;background:#f1f1f1"></div>
<div style="position:absolute;left:7px;top:343px;width:1153px;height:41px;background:#fcfcfc"></div>
<div style="position:absolute;left:7px;top:363px;width:1153px;height:1px;background:#d2d5e2"></div>
<div style="position:absolute;left:7px;top:383px;width:1153px;height:1px;background:#d2d5e2"></div>
<div style="position:absolute;left:18px;top:363px;width:1px;height:21px;background:#d2d5e2"></div>
<div style="position:absolute;left:155px;top:363px;width:1px;height:21px;background:#d2d5e2"></div>
<div style="position:absolute;left:289px;top:363px;width:1px;height:21px;background:#d2d5e2"></div>
<div style="position:absolute;left:356px;top:363px;width:1px;height:21px;background:#d2d5e2"></div>
<div style="position:absolute;left:421px;top:363px;width:1px;height:21px;background:#d2d5e2"></div>
<div style="position:absolute;left:488px;top:363px;width:1px;height:21px;background:#d2d5e2"></div>
<div style="position:absolute;left:555px;top:363px;width:1px;height:21px;background:#d2d5e2"></div>
<div style="position:absolute;left:608px;top:363px;width:1px;height:21px;background:#d2d5e2"></div>
<div style="position:absolute;left:668px;top:363px;width:1px;height:21px;background:#d2d5e2"></div>
<div style="position:absolute;left:706px;top:363px;width:1px;height:21px;background:#d2d5e2"></div>
<div style="position:absolute;left:797px;top:363px;width:1px;height:21px;background:#d2d5e2"></div>
<div style="position:absolute;left:817px;top:363px;width:1px;height:21px;background:#d2d5e2"></div>
<div style="position:absolute;left:837px;top:363px;width:1px;height:21px;background:#d2d5e2"></div>
<div style="position:absolute;left:857px;top:363px;width:1px;height:21px;background:#d2d5e2"></div>
<div style="position:absolute;left:877px;top:363px;width:1px;height:21px;background:#d2d5e2"></div>
<div style="position:absolute;left:897px;top:363px;width:1px;height:21px;background:#d2d5e2"></div>
<div style="position:absolute;left:917px;top:363px;width:1px;height:21px;background:#d2d5e2"></div>
<div style="position:absolute;left:937px;top:363px;width:1px;height:21px;background:#d2d5e2"></div>
<div style="position:absolute;left:957px;top:363px;width:1px;height:21px;background:#d2d5e2"></div>
<div style="position:absolute;left:977px;top:363px;width:1px;height:21px;background:#d2d5e2"></div>
<div style="position:absolute;left:997px;top:363px;width:1px;height:21px;background:#d2d5e2"></div>
<div style="position:absolute;left:1081px;top:363px;width:1px;height:21px;background:#d2d5e2"></div>
<div style="position:absolute;left:1104px;top:363px;width:1px;height:21px;background:#d2d5e2"></div>
<div style="position:absolute;left:18px;top:343px;width:1px;height:21px;background:#d2d5e2"></div>
<div style="position:absolute;left:668px;top:343px;width:1px;height:21px;background:#d2d5e2"></div>
<div style="position:absolute;left:797px;top:343px;width:1px;height:21px;background:#d2d5e2"></div>
<div style="position:absolute;left:977px;top:343px;width:1px;height:21px;background:#d2d5e2"></div>
<div style="position:absolute;left:1081px;top:343px;width:1px;height:21px;background:#d2d5e2"></div>
<div style="position:absolute;left:18px;top:343px;width:1px;height:21px;background:#d2d5e2"></div>
<div class="t" style="left:304.1px;top:346.69px;font-size:11px;line-height:13px;color:#1b1b2b;transform:scaleX(0.9782);transform-origin:0 0;">Bizonylat adatai</div>
<div class="t" style="left:700.2px;top:346.69px;font-size:11px;line-height:13px;color:#1b1b2b;transform:scaleX(1.0);transform-origin:0 0;">Ügyfél adatai</div>
<div class="t" style="left:838.2px;top:346.69px;font-size:11px;line-height:13px;color:#1b1b2b;transform:scaleX(1.0);transform-origin:0 0;">Követelés / tartozás</div>
<div class="t" style="left:1008.3px;top:346.69px;font-size:11px;line-height:13px;color:#1b1b2b;transform:scaleX(0.9605);transform-origin:0 0;">Egyebek</div>
<div style="position:absolute;left:1082px;top:344px;width:74px;height:19px;overflow:hidden;-webkit-mask-image:linear-gradient(to right,#000 69px,rgba(0,0,0,0.2) 74px);mask-image:linear-gradient(to right,#000 69px,rgba(0,0,0,0.2) 74px);"><div class="t" style="left:3.5px;top:2.69px;font-size:11px;line-height:13px;color:#1b1b2b;transform:scaleX(0.97);transform-origin:0 0">Utolsó pénzügyi</div></div>
<div style="position:absolute;left:19px;top:364px;width:134px;height:19px;overflow:hidden;"><div class="t" style="left:3.8px;top:2.69px;font-size:11px;line-height:13px;color:#1b1b2b;transform:scaleX(0.95);transform-origin:0 0">Bizonylatszám</div></div>
<div style="position:absolute;left:156px;top:364px;width:131px;height:19px;overflow:hidden;"><div class="t" style="left:3.8px;top:2.69px;font-size:11px;line-height:13px;color:#1b1b2b;transform:scaleX(0.95);transform-origin:0 0">Külső bizonylatszám</div></div>
<div style="position:absolute;left:290px;top:364px;width:64px;height:19px;overflow:hidden;"><div class="t" style="left:3.8px;top:2.69px;font-size:11px;line-height:13px;color:#1b1b2b;transform:scaleX(0.95);transform-origin:0 0">Kelt</div></div>
<div style="position:absolute;left:357px;top:364px;width:62px;height:19px;overflow:hidden;"><div class="t" style="left:3.8px;top:2.69px;font-size:11px;line-height:13px;color:#1b1b2b;transform:scaleX(0.95);transform-origin:0 0">Teljesítés</div></div>
<div style="position:absolute;left:422px;top:364px;width:64px;height:19px;overflow:hidden;-webkit-mask-image:linear-gradient(to right,#000 59px,rgba(0,0,0,0.2) 64px);mask-image:linear-gradient(to right,#000 59px,rgba(0,0,0,0.2) 64px);"><div class="t" style="left:3.8px;top:2.69px;font-size:11px;line-height:13px;color:#1b1b2b;transform:scaleX(0.95);transform-origin:0 0">Fizetési határidő</div></div>
<div style="position:absolute;left:489px;top:364px;width:64px;height:19px;overflow:hidden;"><div class="t" style="left:3.8px;top:2.69px;font-size:11px;line-height:13px;color:#1b1b2b;transform:scaleX(0.95);transform-origin:0 0">Fizetve</div></div>
<div style="position:absolute;left:556px;top:364px;width:50px;height:19px;overflow:hidden;-webkit-mask-image:linear-gradient(to right,#000 45px,rgba(0,0,0,0.2) 50px);mask-image:linear-gradient(to right,#000 45px,rgba(0,0,0,0.2) 50px);"><div class="t" style="left:3.8px;top:2.69px;font-size:11px;line-height:13px;color:#1b1b2b;transform:scaleX(0.95);transform-origin:0 0">Fizetési mód</div></div>
<div style="position:absolute;left:609px;top:364px;width:57px;height:19px;overflow:hidden;-webkit-mask-image:linear-gradient(to right,#000 52px,rgba(0,0,0,0.2) 57px);mask-image:linear-gradient(to right,#000 52px,rgba(0,0,0,0.2) 57px);"><div class="t" style="left:3.8px;top:2.69px;font-size:11px;line-height:13px;color:#1b1b2b;transform:scaleX(0.95);transform-origin:0 0">Fizetési mód</div></div>
<div style="position:absolute;left:669px;top:364px;width:32px;height:19px;overflow:hidden;-webkit-mask-image:linear-gradient(to right,#000 27px,rgba(0,0,0,0.2) 32px);mask-image:linear-gradient(to right,#000 27px,rgba(0,0,0,0.2) 32px);"><div class="t" style="left:3.8px;top:2.69px;font-size:11px;line-height:13px;color:#1b1b2b;transform:scaleX(0.95);transform-origin:0 0">Ügyfél</div></div>
<div style="position:absolute;left:707px;top:364px;width:88px;height:19px;overflow:hidden;"><div class="t" style="left:3.8px;top:2.69px;font-size:11px;line-height:13px;color:#1b1b2b;transform:scaleX(0.95);transform-origin:0 0">Bankszámlaszám</div></div>
<div style="position:absolute;left:798px;top:364px;width:17px;height:19px;overflow:hidden;"><div class="t" style="left:3.8px;top:2.69px;font-size:11px;line-height:13px;color:#1b1b2b;transform:scaleX(0.95);transform-origin:0 0">Ör</div></div>
<div style="position:absolute;left:818px;top:364px;width:17px;height:19px;overflow:hidden;-webkit-mask-image:linear-gradient(to right,#000 12px,rgba(0,0,0,0.2) 17px);mask-image:linear-gradient(to right,#000 12px,rgba(0,0,0,0.2) 17px);"><div class="t" style="left:3.8px;top:2.69px;font-size:11px;line-height:13px;color:#1b1b2b;transform:scaleX(0.95);transform-origin:0 0">Hitel</div></div>
<div style="position:absolute;left:838px;top:364px;width:17px;height:19px;overflow:hidden;-webkit-mask-image:linear-gradient(to right,#000 12px,rgba(0,0,0,0.2) 17px);mask-image:linear-gradient(to right,#000 12px,rgba(0,0,0,0.2) 17px);"><div class="t" style="left:3.8px;top:2.69px;font-size:11px;line-height:13px;color:#1b1b2b;transform:scaleX(0.95);transform-origin:0 0">Összeg</div></div>
<div style="position:absolute;left:858px;top:364px;width:17px;height:19px;overflow:hidden;-webkit-mask-image:linear-gradient(to right,#000 12px,rgba(0,0,0,0.2) 17px);mask-image:linear-gradient(to right,#000 12px,rgba(0,0,0,0.2) 17px);"><div class="t" style="left:3.8px;top:2.69px;font-size:11px;line-height:13px;color:#1b1b2b;transform:scaleX(0.95);transform-origin:0 0">Rendezve</div></div>
<div style="position:absolute;left:878px;top:364px;width:17px;height:19px;overflow:hidden;-webkit-mask-image:linear-gradient(to right,#000 12px,rgba(0,0,0,0.2) 17px);mask-image:linear-gradient(to right,#000 12px,rgba(0,0,0,0.2) 17px);"><div class="t" style="left:3.8px;top:2.69px;font-size:11px;line-height:13px;color:#1b1b2b;transform:scaleX(0.95);transform-origin:0 0">Leírva</div></div>
<div style="position:absolute;left:898px;top:364px;width:17px;height:19px;overflow:hidden;"><div class="t" style="left:3.8px;top:2.69px;font-size:11px;line-height:13px;color:#1b1b2b;transform:scaleX(0.95);transform-origin:0 0">Eg</div></div>
<div style="position:absolute;left:918px;top:364px;width:17px;height:19px;overflow:hidden;"><div class="t" style="left:3.8px;top:2.69px;font-size:11px;line-height:13px;color:#1b1b2b;transform:scaleX(0.95);transform-origin:0 0">Pa</div></div>
<div style="position:absolute;left:938px;top:364px;width:17px;height:19px;overflow:hidden;"><div class="t" style="left:3.8px;top:2.69px;font-size:11px;line-height:13px;color:#1b1b2b;transform:scaleX(0.95);transform-origin:0 0">Es</div></div>
<div style="position:absolute;left:958px;top:364px;width:17px;height:19px;overflow:hidden;"><div class="t" style="left:3.8px;top:2.69px;font-size:11px;line-height:13px;color:#1b1b2b;transform:scaleX(0.95);transform-origin:0 0">Pn</div></div>
<div style="position:absolute;left:978px;top:364px;width:17px;height:19px;overflow:hidden;-webkit-mask-image:linear-gradient(to right,#000 12px,rgba(0,0,0,0.2) 17px);mask-image:linear-gradient(to right,#000 12px,rgba(0,0,0,0.2) 17px);"><div class="t" style="left:3.8px;top:2.69px;font-size:11px;line-height:13px;color:#1b1b2b;transform:scaleX(0.95);transform-origin:0 0">Vizsgálat</div></div>
<div style="position:absolute;left:998px;top:364px;width:81px;height:19px;overflow:hidden;-webkit-mask-image:linear-gradient(to right,#000 76px,rgba(0,0,0,0.2) 81px);mask-image:linear-gradient(to right,#000 76px,rgba(0,0,0,0.2) 81px);"><div class="t" style="left:3.8px;top:2.69px;font-size:11px;line-height:13px;color:#1b1b2b;transform:scaleX(0.95);transform-origin:0 0">Utolsó feljegyzés</div></div>
<div style="position:absolute;left:1082px;top:364px;width:20px;height:19px;overflow:hidden;"><div class="t" style="left:3.8px;top:2.69px;font-size:11px;line-height:13px;color:#1b1b2b;transform:scaleX(0.95);transform-origin:0 0">Kel</div></div>
<div style="position:absolute;left:1105px;top:364px;width:52px;height:19px;overflow:hidden;-webkit-mask-image:linear-gradient(to right,#000 47px,rgba(0,0,0,0.2) 52px);mask-image:linear-gradient(to right,#000 47px,rgba(0,0,0,0.2) 52px);"><div class="t" style="left:3.8px;top:2.69px;font-size:11px;line-height:13px;color:#1b1b2b;transform:scaleX(0.95);transform-origin:0 0">Sablon (utolsó)</div></div>
<svg style="position:absolute;left:8.0px;top:348.9px" width="9" height="9" viewBox="-4.5 -4.5 9 9"><g stroke="#5a5a5a" stroke-width="1.1"><path d="M0 -3.6V3.6M-3.6 0H3.6M-2.6 -2.6L2.6 2.6M-2.6 2.6L2.6 -2.6"/></g><circle r="1" fill="#fcfcfc"/></svg>
<svg style="position:absolute;left:8.0px;top:368.9px" width="9" height="9" viewBox="-4.5 -4.5 9 9"><g stroke="#5a5a5a" stroke-width="1.1"><path d="M0 -3.6V3.6M-3.6 0H3.6M-2.6 -2.6L2.6 2.6M-2.6 2.6L2.6 -2.6"/></g><circle r="1" fill="#fcfcfc"/></svg>
<div style="position:absolute;left:7px;top:384px;width:11px;height:19px;background:#fcfcfc"></div>
<div style="position:absolute;left:19px;top:384px;width:1140px;height:19px;background:#d60000"></div>
<div style="position:absolute;left:7px;top:403px;width:1153px;height:1px;background:#dcdcdc"></div>
<div style="position:absolute;left:19px;top:384px;width:136px;height:19px;overflow:hidden;"><div class="t" style="left:0.8px;top:3.69px;font-size:11px;line-height:13px;color:#1a0000;transform:scaleX(0.955);transform-origin:0 0">SZLA-1-004220</div></div>
<div style="position:absolute;left:290px;top:384px;width:66px;height:19px;overflow:hidden;"><div class="t" style="left:1.5px;top:3.69px;font-size:11px;line-height:13px;color:#1a0000;transform:scaleX(1.0);transform-origin:0 0">2022.07.19</div></div>
<div style="position:absolute;left:357px;top:384px;width:64px;height:19px;overflow:hidden;"><div class="t" style="left:1.5px;top:3.69px;font-size:11px;line-height:13px;color:#1a0000;transform:scaleX(1.0);transform-origin:0 0">2022.07.19</div></div>
<div style="position:absolute;left:422px;top:384px;width:66px;height:19px;overflow:hidden;"><div class="t" style="left:1.5px;top:3.69px;font-size:11px;line-height:13px;color:#1a0000;transform:scaleX(1.0);transform-origin:0 0">2022.07.22</div></div>
<div style="position:absolute;left:556px;top:384px;width:52px;height:19px;overflow:hidden;"><div class="t" style="right:1.5px;top:3.69px;font-size:11px;line-height:13px;color:#1a0000;transform:scaleX(1.0);transform-origin:0 0">2</div></div>
<div style="position:absolute;left:609px;top:384px;width:59px;height:19px;overflow:hidden;"><div class="t" style="left:1.5px;top:3.69px;font-size:11px;line-height:13px;color:#1a0000;transform:scaleX(1.0);transform-origin:0 0">Átutalás</div></div>
<div style="position:absolute;left:669px;top:384px;width:37px;height:19px;overflow:hidden;"><div class="t" style="left:1.5px;top:3.69px;font-size:11px;line-height:13px;color:#1a0000;transform:scaleX(1.0);transform-origin:0 0">TESZT</div></div>
<div style="position:absolute;left:798px;top:384px;width:19px;height:19px;overflow:hidden;"><div class="t" style="right:1.5px;top:3.69px;font-size:11px;line-height:13px;color:#1a0000;transform:scaleX(1.0);transform-origin:0 0">0</div></div>
<div style="position:absolute;left:818px;top:384px;width:19px;height:19px;overflow:hidden;"><div class="t" style="right:1.5px;top:3.69px;font-size:11px;line-height:13px;color:#1a0000;transform:scaleX(1.0);transform-origin:0 0">0</div></div>
<div style="position:absolute;left:838px;top:384px;width:19px;height:19px;overflow:hidden;"><div class="t" style="left:1.5px;top:3.69px;font-size:11px;line-height:13px;color:#1a0000;transform:scaleX(1.0);transform-origin:0 0">2 0</div></div>
<div style="position:absolute;left:858px;top:384px;width:19px;height:19px;overflow:hidden;"><div class="t" style="right:1.5px;top:3.69px;font-size:11px;line-height:13px;color:#1a0000;transform:scaleX(1.0);transform-origin:0 0">0</div></div>
<div style="position:absolute;left:878px;top:384px;width:19px;height:19px;overflow:hidden;"><div class="t" style="right:1.5px;top:3.69px;font-size:11px;line-height:13px;color:#1a0000;transform:scaleX(1.0);transform-origin:0 0">0</div></div>
<div style="position:absolute;left:898px;top:384px;width:19px;height:19px;overflow:hidden;"><div class="t" style="left:1.5px;top:3.69px;font-size:11px;line-height:13px;color:#1a0000;transform:scaleX(1.0);transform-origin:0 0">2 0</div></div>
<div style="position:absolute;left:918px;top:384px;width:19px;height:19px;overflow:hidden;"><div class="t" style="right:1.5px;top:3.69px;font-size:11px;line-height:13px;color:#1a0000;transform:scaleX(1.0);transform-origin:0 0">0</div></div>
<div style="position:absolute;left:938px;top:384px;width:19px;height:19px;overflow:hidden;"><div class="t" style="right:1.5px;top:3.69px;font-size:11px;line-height:13px;color:#1a0000;transform:scaleX(1.0);transform-origin:0 0">0</div></div>
<div style="position:absolute;left:958px;top:384px;width:19px;height:19px;overflow:hidden;"><div class="t" style="left:1.5px;top:3.69px;font-size:11px;line-height:13px;color:#1a0000;transform:scaleX(1.0);transform-origin:0 0">Ft</div></div>
<div style="position:absolute;left:981px;top:387px;width:13px;height:13px;background:#fff;border:1px solid #d2ecd2;box-sizing:border-box"></div>
<div style="position:absolute;left:7px;top:404px;width:11px;height:19px;background:#fcfcfc"></div>
<div style="position:absolute;left:19px;top:404px;width:1140px;height:19px;background:#ff0000"></div>
<div style="position:absolute;left:7px;top:423px;width:1153px;height:1px;background:#dcdcdc"></div>
<div style="position:absolute;left:19px;top:404px;width:136px;height:19px;overflow:hidden;"><div class="t" style="left:0.8px;top:3.69px;font-size:11px;line-height:13px;color:#1a0000;transform:scaleX(0.955);transform-origin:0 0">SZLA-1-004223</div></div>
<div style="position:absolute;left:290px;top:404px;width:66px;height:19px;overflow:hidden;"><div class="t" style="left:1.5px;top:3.69px;font-size:11px;line-height:13px;color:#1a0000;transform:scaleX(1.0);transform-origin:0 0">2022.07.20</div></div>
<div style="position:absolute;left:357px;top:404px;width:64px;height:19px;overflow:hidden;"><div class="t" style="left:1.5px;top:3.69px;font-size:11px;line-height:13px;color:#1a0000;transform:scaleX(1.0);transform-origin:0 0">2022.07.20</div></div>
<div style="position:absolute;left:422px;top:404px;width:66px;height:19px;overflow:hidden;"><div class="t" style="left:1.5px;top:3.69px;font-size:11px;line-height:13px;color:#1a0000;transform:scaleX(1.0);transform-origin:0 0">2022.07.23</div></div>
<div style="position:absolute;left:556px;top:404px;width:52px;height:19px;overflow:hidden;"><div class="t" style="right:1.5px;top:3.69px;font-size:11px;line-height:13px;color:#1a0000;transform:scaleX(1.0);transform-origin:0 0">2</div></div>
<div style="position:absolute;left:609px;top:404px;width:59px;height:19px;overflow:hidden;"><div class="t" style="left:1.5px;top:3.69px;font-size:11px;line-height:13px;color:#1a0000;transform:scaleX(1.0);transform-origin:0 0">Átutalás</div></div>
<div style="position:absolute;left:669px;top:404px;width:37px;height:19px;overflow:hidden;"><div class="t" style="left:1.5px;top:3.69px;font-size:11px;line-height:13px;color:#1a0000;transform:scaleX(1.0);transform-origin:0 0">TESZT</div></div>
<div style="position:absolute;left:798px;top:404px;width:19px;height:19px;overflow:hidden;"><div class="t" style="right:1.5px;top:3.69px;font-size:11px;line-height:13px;color:#1a0000;transform:scaleX(1.0);transform-origin:0 0">0</div></div>
<div style="position:absolute;left:818px;top:404px;width:19px;height:19px;overflow:hidden;"><div class="t" style="right:1.5px;top:3.69px;font-size:11px;line-height:13px;color:#1a0000;transform:scaleX(1.0);transform-origin:0 0">0</div></div>
<div style="position:absolute;left:838px;top:404px;width:19px;height:19px;overflow:hidden;"><div class="t" style="left:1.5px;top:3.69px;font-size:11px;line-height:13px;color:#1a0000;transform:scaleX(1.0);transform-origin:0 0">50</div></div>
<div style="position:absolute;left:858px;top:404px;width:19px;height:19px;overflow:hidden;"><div class="t" style="right:1.5px;top:3.69px;font-size:11px;line-height:13px;color:#1a0000;transform:scaleX(1.0);transform-origin:0 0">0</div></div>
<div style="position:absolute;left:878px;top:404px;width:19px;height:19px;overflow:hidden;"><div class="t" style="right:1.5px;top:3.69px;font-size:11px;line-height:13px;color:#1a0000;transform:scaleX(1.0);transform-origin:0 0">0</div></div>
<div style="position:absolute;left:898px;top:404px;width:19px;height:19px;overflow:hidden;"><div class="t" style="left:1.5px;top:3.69px;font-size:11px;line-height:13px;color:#1a0000;transform:scaleX(1.0);transform-origin:0 0">50</div></div>
<div style="position:absolute;left:918px;top:404px;width:19px;height:19px;overflow:hidden;"><div class="t" style="right:1.5px;top:3.69px;font-size:11px;line-height:13px;color:#1a0000;transform:scaleX(1.0);transform-origin:0 0">0</div></div>
<div style="position:absolute;left:938px;top:404px;width:19px;height:19px;overflow:hidden;"><div class="t" style="right:1.5px;top:3.69px;font-size:11px;line-height:13px;color:#1a0000;transform:scaleX(1.0);transform-origin:0 0">0</div></div>
<div style="position:absolute;left:958px;top:404px;width:19px;height:19px;overflow:hidden;"><div class="t" style="left:1.5px;top:3.69px;font-size:11px;line-height:13px;color:#1a0000;transform:scaleX(1.0);transform-origin:0 0">Ft</div></div>
<div style="position:absolute;left:981px;top:407px;width:13px;height:13px;background:#fff;border:1px solid #d2ecd2;box-sizing:border-box"></div>
<div style="position:absolute;left:7px;top:424px;width:11px;height:19px;background:#fcfcfc"></div>
<div style="position:absolute;left:19px;top:424px;width:1140px;height:19px;background:#d60000"></div>
<div style="position:absolute;left:7px;top:443px;width:1153px;height:1px;background:#dcdcdc"></div>
<div style="position:absolute;left:19px;top:424px;width:136px;height:19px;overflow:hidden;"><div class="t" style="left:0.8px;top:3.69px;font-size:11px;line-height:13px;color:#1a0000;transform:scaleX(0.955);transform-origin:0 0">SZLA-1-004224</div></div>
<div style="position:absolute;left:290px;top:424px;width:66px;height:19px;overflow:hidden;"><div class="t" style="left:1.5px;top:3.69px;font-size:11px;line-height:13px;color:#1a0000;transform:scaleX(1.0);transform-origin:0 0">2022.07.20</div></div>
<div style="position:absolute;left:357px;top:424px;width:64px;height:19px;overflow:hidden;"><div class="t" style="left:1.5px;top:3.69px;font-size:11px;line-height:13px;color:#1a0000;transform:scaleX(1.0);transform-origin:0 0">2022.07.20</div></div>
<div style="position:absolute;left:422px;top:424px;width:66px;height:19px;overflow:hidden;"><div class="t" style="left:1.5px;top:3.69px;font-size:11px;line-height:13px;color:#1a0000;transform:scaleX(1.0);transform-origin:0 0">2022.07.23</div></div>
<div style="position:absolute;left:556px;top:424px;width:52px;height:19px;overflow:hidden;"><div class="t" style="right:1.5px;top:3.69px;font-size:11px;line-height:13px;color:#1a0000;transform:scaleX(1.0);transform-origin:0 0">2</div></div>
<div style="position:absolute;left:609px;top:424px;width:59px;height:19px;overflow:hidden;"><div class="t" style="left:1.5px;top:3.69px;font-size:11px;line-height:13px;color:#1a0000;transform:scaleX(1.0);transform-origin:0 0">Átutalás</div></div>
<div style="position:absolute;left:669px;top:424px;width:37px;height:19px;overflow:hidden;"><div class="t" style="left:1.5px;top:3.69px;font-size:11px;line-height:13px;color:#1a0000;transform:scaleX(1.0);transform-origin:0 0">TESZT</div></div>
<div style="position:absolute;left:798px;top:424px;width:19px;height:19px;overflow:hidden;"><div class="t" style="right:1.5px;top:3.69px;font-size:11px;line-height:13px;color:#1a0000;transform:scaleX(1.0);transform-origin:0 0">0</div></div>
<div style="position:absolute;left:818px;top:424px;width:19px;height:19px;overflow:hidden;"><div class="t" style="right:1.5px;top:3.69px;font-size:11px;line-height:13px;color:#1a0000;transform:scaleX(1.0);transform-origin:0 0">0</div></div>
<div style="position:absolute;left:838px;top:424px;width:19px;height:19px;overflow:hidden;"><div class="t" style="left:1.5px;top:3.69px;font-size:11px;line-height:13px;color:#1a0000;transform:scaleX(1.0);transform-origin:0 0">1 0</div></div>
<div style="position:absolute;left:858px;top:424px;width:19px;height:19px;overflow:hidden;"><div class="t" style="right:1.5px;top:3.69px;font-size:11px;line-height:13px;color:#1a0000;transform:scaleX(1.0);transform-origin:0 0">0</div></div>
<div style="position:absolute;left:878px;top:424px;width:19px;height:19px;overflow:hidden;"><div class="t" style="right:1.5px;top:3.69px;font-size:11px;line-height:13px;color:#1a0000;transform:scaleX(1.0);transform-origin:0 0">0</div></div>
<div style="position:absolute;left:898px;top:424px;width:19px;height:19px;overflow:hidden;"><div class="t" style="left:1.5px;top:3.69px;font-size:11px;line-height:13px;color:#1a0000;transform:scaleX(1.0);transform-origin:0 0">1 0</div></div>
<div style="position:absolute;left:918px;top:424px;width:19px;height:19px;overflow:hidden;"><div class="t" style="right:1.5px;top:3.69px;font-size:11px;line-height:13px;color:#1a0000;transform:scaleX(1.0);transform-origin:0 0">0</div></div>
<div style="position:absolute;left:938px;top:424px;width:19px;height:19px;overflow:hidden;"><div class="t" style="right:1.5px;top:3.69px;font-size:11px;line-height:13px;color:#1a0000;transform:scaleX(1.0);transform-origin:0 0">0</div></div>
<div style="position:absolute;left:958px;top:424px;width:19px;height:19px;overflow:hidden;"><div class="t" style="left:1.5px;top:3.69px;font-size:11px;line-height:13px;color:#1a0000;transform:scaleX(1.0);transform-origin:0 0">Ft</div></div>
<div style="position:absolute;left:981px;top:427px;width:13px;height:13px;background:#fff;border:1px solid #d2ecd2;box-sizing:border-box"></div>
<div style="position:absolute;left:7px;top:444px;width:11px;height:19px;background:#fcfcfc"></div>
<div style="position:absolute;left:19px;top:444px;width:1140px;height:19px;background:#ff0000"></div>
<div style="position:absolute;left:7px;top:463px;width:1153px;height:1px;background:#dcdcdc"></div>
<div style="position:absolute;left:19px;top:444px;width:136px;height:19px;overflow:hidden;"><div class="t" style="left:0.8px;top:3.69px;font-size:11px;line-height:13px;color:#1a0000;transform:scaleX(0.955);transform-origin:0 0">ELSZ-1-000203</div></div>
<div style="position:absolute;left:290px;top:444px;width:66px;height:19px;overflow:hidden;"><div class="t" style="left:1.5px;top:3.69px;font-size:11px;line-height:13px;color:#1a0000;transform:scaleX(1.0);transform-origin:0 0">2022.07.21</div></div>
<div style="position:absolute;left:357px;top:444px;width:64px;height:19px;overflow:hidden;"><div class="t" style="left:1.5px;top:3.69px;font-size:11px;line-height:13px;color:#1a0000;transform:scaleX(1.0);transform-origin:0 0">2022.07.21</div></div>
<div style="position:absolute;left:422px;top:444px;width:66px;height:19px;overflow:hidden;"><div class="t" style="left:1.5px;top:3.69px;font-size:11px;line-height:13px;color:#1a0000;transform:scaleX(1.0);transform-origin:0 0">2022.07.24</div></div>
<div style="position:absolute;left:556px;top:444px;width:52px;height:19px;overflow:hidden;"><div class="t" style="right:1.5px;top:3.69px;font-size:11px;line-height:13px;color:#1a0000;transform:scaleX(1.0);transform-origin:0 0">2</div></div>
<div style="position:absolute;left:609px;top:444px;width:59px;height:19px;overflow:hidden;"><div class="t" style="left:1.5px;top:3.69px;font-size:11px;line-height:13px;color:#1a0000;transform:scaleX(1.0);transform-origin:0 0">Átutalás</div></div>
<div style="position:absolute;left:669px;top:444px;width:37px;height:19px;overflow:hidden;"><div class="t" style="left:1.5px;top:3.69px;font-size:11px;line-height:13px;color:#1a0000;transform:scaleX(1.0);transform-origin:0 0">TESZT</div></div>
<div style="position:absolute;left:798px;top:444px;width:19px;height:19px;overflow:hidden;"><div class="t" style="right:1.5px;top:3.69px;font-size:11px;line-height:13px;color:#1a0000;transform:scaleX(1.0);transform-origin:0 0">0</div></div>
<div style="position:absolute;left:818px;top:444px;width:19px;height:19px;overflow:hidden;"><div class="t" style="right:1.5px;top:3.69px;font-size:11px;line-height:13px;color:#1a0000;transform:scaleX(1.0);transform-origin:0 0">0</div></div>
<div style="position:absolute;left:838px;top:444px;width:19px;height:19px;overflow:hidden;"><div class="t" style="left:1.5px;top:3.69px;font-size:11px;line-height:13px;color:#1a0000;transform:scaleX(1.0);transform-origin:0 0">16</div></div>
<div style="position:absolute;left:858px;top:444px;width:19px;height:19px;overflow:hidden;"><div class="t" style="right:1.5px;top:3.69px;font-size:11px;line-height:13px;color:#1a0000;transform:scaleX(1.0);transform-origin:0 0">0</div></div>
<div style="position:absolute;left:878px;top:444px;width:19px;height:19px;overflow:hidden;"><div class="t" style="right:1.5px;top:3.69px;font-size:11px;line-height:13px;color:#1a0000;transform:scaleX(1.0);transform-origin:0 0">0</div></div>
<div style="position:absolute;left:898px;top:444px;width:19px;height:19px;overflow:hidden;"><div class="t" style="left:1.5px;top:3.69px;font-size:11px;line-height:13px;color:#1a0000;transform:scaleX(1.0);transform-origin:0 0">16</div></div>
<div style="position:absolute;left:918px;top:444px;width:19px;height:19px;overflow:hidden;"><div class="t" style="right:1.5px;top:3.69px;font-size:11px;line-height:13px;color:#1a0000;transform:scaleX(1.0);transform-origin:0 0">0</div></div>
<div style="position:absolute;left:938px;top:444px;width:19px;height:19px;overflow:hidden;"><div class="t" style="right:1.5px;top:3.69px;font-size:11px;line-height:13px;color:#1a0000;transform:scaleX(1.0);transform-origin:0 0">0</div></div>
<div style="position:absolute;left:958px;top:444px;width:19px;height:19px;overflow:hidden;"><div class="t" style="left:1.5px;top:3.69px;font-size:11px;line-height:13px;color:#1a0000;transform:scaleX(1.0);transform-origin:0 0">Ft</div></div>
<div style="position:absolute;left:981px;top:447px;width:13px;height:13px;background:#fff;border:1px solid #d2ecd2;box-sizing:border-box"></div>
<div style="position:absolute;left:7px;top:464px;width:11px;height:19px;background:#fcfcfc"></div>
<div style="position:absolute;left:19px;top:464px;width:1140px;height:19px;background:#d60000"></div>
<div style="position:absolute;left:7px;top:483px;width:1153px;height:1px;background:#dcdcdc"></div>
<div style="position:absolute;left:19px;top:464px;width:136px;height:19px;overflow:hidden;"><div class="t" style="left:0.8px;top:3.69px;font-size:11px;line-height:13px;color:#1a0000;transform:scaleX(0.955);transform-origin:0 0">SZLA-1-002089</div></div>
<div style="position:absolute;left:290px;top:464px;width:66px;height:19px;overflow:hidden;"><div class="t" style="left:1.5px;top:3.69px;font-size:11px;line-height:13px;color:#1a0000;transform:scaleX(1.0);transform-origin:0 0">2022.05.02</div></div>
<div style="position:absolute;left:357px;top:464px;width:64px;height:19px;overflow:hidden;"><div class="t" style="left:1.5px;top:3.69px;font-size:11px;line-height:13px;color:#1a0000;transform:scaleX(1.0);transform-origin:0 0">2022.05.02</div></div>
<div style="position:absolute;left:422px;top:464px;width:66px;height:19px;overflow:hidden;"><div class="t" style="left:1.5px;top:3.69px;font-size:11px;line-height:13px;color:#1a0000;transform:scaleX(1.0);transform-origin:0 0">2022.05.05</div></div>
<div style="position:absolute;left:556px;top:464px;width:52px;height:19px;overflow:hidden;"><div class="t" style="right:1.5px;top:3.69px;font-size:11px;line-height:13px;color:#1a0000;transform:scaleX(1.0);transform-origin:0 0">2</div></div>
<div style="position:absolute;left:609px;top:464px;width:59px;height:19px;overflow:hidden;"><div class="t" style="left:1.5px;top:3.69px;font-size:11px;line-height:13px;color:#1a0000;transform:scaleX(1.0);transform-origin:0 0">Átutalás</div></div>
<div style="position:absolute;left:669px;top:464px;width:37px;height:19px;overflow:hidden;"><div class="t" style="left:1.5px;top:3.69px;font-size:11px;line-height:13px;color:#1a0000;transform:scaleX(1.0);transform-origin:0 0">TESZT</div></div>
<div style="position:absolute;left:798px;top:464px;width:19px;height:19px;overflow:hidden;"><div class="t" style="right:1.5px;top:3.69px;font-size:11px;line-height:13px;color:#1a0000;transform:scaleX(1.0);transform-origin:0 0">0</div></div>
<div style="position:absolute;left:818px;top:464px;width:19px;height:19px;overflow:hidden;"><div class="t" style="right:1.5px;top:3.69px;font-size:11px;line-height:13px;color:#1a0000;transform:scaleX(1.0);transform-origin:0 0">0</div></div>
<div style="position:absolute;left:838px;top:464px;width:19px;height:19px;overflow:hidden;"><div class="t" style="left:1.5px;top:3.69px;font-size:11px;line-height:13px;color:#1a0000;transform:scaleX(1.0);transform-origin:0 0">50</div></div>
<div style="position:absolute;left:858px;top:464px;width:19px;height:19px;overflow:hidden;"><div class="t" style="left:1.5px;top:3.69px;font-size:11px;line-height:13px;color:#1a0000;transform:scaleX(1.0);transform-origin:0 0">2 0</div></div>
<div style="position:absolute;left:878px;top:464px;width:19px;height:19px;overflow:hidden;"><div class="t" style="right:1.5px;top:3.69px;font-size:11px;line-height:13px;color:#1a0000;transform:scaleX(1.0);transform-origin:0 0">0</div></div>
<div style="position:absolute;left:898px;top:464px;width:19px;height:19px;overflow:hidden;"><div class="t" style="left:1.5px;top:3.69px;font-size:11px;line-height:13px;color:#1a0000;transform:scaleX(1.0);transform-origin:0 0">48</div></div>
<div style="position:absolute;left:918px;top:464px;width:19px;height:19px;overflow:hidden;"><div class="t" style="right:1.5px;top:3.69px;font-size:11px;line-height:13px;color:#1a0000;transform:scaleX(1.0);transform-origin:0 0">0</div></div>
<div style="position:absolute;left:938px;top:464px;width:19px;height:19px;overflow:hidden;"><div class="t" style="right:1.5px;top:3.69px;font-size:11px;line-height:13px;color:#1a0000;transform:scaleX(1.0);transform-origin:0 0">0</div></div>
<div style="position:absolute;left:958px;top:464px;width:19px;height:19px;overflow:hidden;"><div class="t" style="left:1.5px;top:3.69px;font-size:11px;line-height:13px;color:#1a0000;transform:scaleX(1.0);transform-origin:0 0">Ft</div></div>
<div style="position:absolute;left:981px;top:467px;width:13px;height:13px;background:#fff;border:1px solid #d2ecd2;box-sizing:border-box"></div>
<div style="position:absolute;left:7px;top:484px;width:11px;height:19px;background:#fcfcfc"></div>
<div style="position:absolute;left:19px;top:484px;width:1140px;height:19px;background:#ff0000"></div>
<div style="position:absolute;left:7px;top:503px;width:1153px;height:1px;background:#dcdcdc"></div>
<div style="position:absolute;left:19px;top:484px;width:136px;height:19px;overflow:hidden;"><div class="t" style="left:0.8px;top:3.69px;font-size:11px;line-height:13px;color:#1a0000;transform:scaleX(0.955);transform-origin:0 0">SZLA-1-002090</div></div>
<div style="position:absolute;left:290px;top:484px;width:66px;height:19px;overflow:hidden;"><div class="t" style="left:1.5px;top:3.69px;font-size:11px;line-height:13px;color:#1a0000;transform:scaleX(1.0);transform-origin:0 0">2022.05.02</div></div>
<div style="position:absolute;left:357px;top:484px;width:64px;height:19px;overflow:hidden;"><div class="t" style="left:1.5px;top:3.69px;font-size:11px;line-height:13px;color:#1a0000;transform:scaleX(1.0);transform-origin:0 0">2022.05.02</div></div>
<div style="position:absolute;left:422px;top:484px;width:66px;height:19px;overflow:hidden;"><div class="t" style="left:1.5px;top:3.69px;font-size:11px;line-height:13px;color:#1a0000;transform:scaleX(1.0);transform-origin:0 0">2022.05.05</div></div>
<div style="position:absolute;left:556px;top:484px;width:52px;height:19px;overflow:hidden;"><div class="t" style="right:1.5px;top:3.69px;font-size:11px;line-height:13px;color:#1a0000;transform:scaleX(1.0);transform-origin:0 0">2</div></div>
<div style="position:absolute;left:609px;top:484px;width:59px;height:19px;overflow:hidden;"><div class="t" style="left:1.5px;top:3.69px;font-size:11px;line-height:13px;color:#1a0000;transform:scaleX(1.0);transform-origin:0 0">Átutalás</div></div>
<div style="position:absolute;left:669px;top:484px;width:37px;height:19px;overflow:hidden;"><div class="t" style="left:1.5px;top:3.69px;font-size:11px;line-height:13px;color:#1a0000;transform:scaleX(1.0);transform-origin:0 0">TESZT</div></div>
<div style="position:absolute;left:798px;top:484px;width:19px;height:19px;overflow:hidden;"><div class="t" style="right:1.5px;top:3.69px;font-size:11px;line-height:13px;color:#1a0000;transform:scaleX(1.0);transform-origin:0 0">0</div></div>
<div style="position:absolute;left:818px;top:484px;width:19px;height:19px;overflow:hidden;"><div class="t" style="right:1.5px;top:3.69px;font-size:11px;line-height:13px;color:#1a0000;transform:scaleX(1.0);transform-origin:0 0">0</div></div>
<div style="position:absolute;left:838px;top:484px;width:19px;height:19px;overflow:hidden;"><div class="t" style="left:1.5px;top:3.69px;font-size:11px;line-height:13px;color:#1a0000;transform:scaleX(1.0);transform-origin:0 0">50</div></div>
<div style="position:absolute;left:858px;top:484px;width:19px;height:19px;overflow:hidden;"><div class="t" style="left:1.5px;top:3.69px;font-size:11px;line-height:13px;color:#1a0000;transform:scaleX(1.0);transform-origin:0 0">49</div></div>
<div style="position:absolute;left:878px;top:484px;width:19px;height:19px;overflow:hidden;"><div class="t" style="right:1.5px;top:3.69px;font-size:11px;line-height:13px;color:#1a0000;transform:scaleX(1.0);transform-origin:0 0">0</div></div>
<div style="position:absolute;left:898px;top:484px;width:19px;height:19px;overflow:hidden;"><div class="t" style="left:1.5px;top:3.69px;font-size:11px;line-height:13px;color:#1a0000;transform:scaleX(1.0);transform-origin:0 0">1 0</div></div>
<div style="position:absolute;left:918px;top:484px;width:19px;height:19px;overflow:hidden;"><div class="t" style="right:1.5px;top:3.69px;font-size:11px;line-height:13px;color:#1a0000;transform:scaleX(1.0);transform-origin:0 0">0</div></div>
<div style="position:absolute;left:938px;top:484px;width:19px;height:19px;overflow:hidden;"><div class="t" style="right:1.5px;top:3.69px;font-size:11px;line-height:13px;color:#1a0000;transform:scaleX(1.0);transform-origin:0 0">0</div></div>
<div style="position:absolute;left:958px;top:484px;width:19px;height:19px;overflow:hidden;"><div class="t" style="left:1.5px;top:3.69px;font-size:11px;line-height:13px;color:#1a0000;transform:scaleX(1.0);transform-origin:0 0">Ft</div></div>
<div style="position:absolute;left:981px;top:487px;width:13px;height:13px;background:#fff;border:1px solid #d2ecd2;box-sizing:border-box"></div>
<div style="position:absolute;left:7px;top:504px;width:11px;height:19px;background:#fcfcfc"></div>
<div style="position:absolute;left:19px;top:504px;width:1140px;height:19px;background:#d60000"></div>
<div style="position:absolute;left:7px;top:523px;width:1153px;height:1px;background:#dcdcdc"></div>
<div style="position:absolute;left:19px;top:504px;width:136px;height:19px;overflow:hidden;"><div class="t" style="left:0.8px;top:3.69px;font-size:11px;line-height:13px;color:#1a0000;transform:scaleX(0.955);transform-origin:0 0">ELSZ-1-000099</div></div>
<div style="position:absolute;left:290px;top:504px;width:66px;height:19px;overflow:hidden;"><div class="t" style="left:1.5px;top:3.69px;font-size:11px;line-height:13px;color:#1a0000;transform:scaleX(1.0);transform-origin:0 0">2022.06.29</div></div>
<div style="position:absolute;left:357px;top:504px;width:64px;height:19px;overflow:hidden;"><div class="t" style="left:1.5px;top:3.69px;font-size:11px;line-height:13px;color:#1a0000;transform:scaleX(1.0);transform-origin:0 0">2022.06.29</div></div>
<div style="position:absolute;left:422px;top:504px;width:66px;height:19px;overflow:hidden;"><div class="t" style="left:1.5px;top:3.69px;font-size:11px;line-height:13px;color:#1a0000;transform:scaleX(1.0);transform-origin:0 0">2022.07.02</div></div>
<div style="position:absolute;left:556px;top:504px;width:52px;height:19px;overflow:hidden;"><div class="t" style="right:1.5px;top:3.69px;font-size:11px;line-height:13px;color:#1a0000;transform:scaleX(1.0);transform-origin:0 0">2</div></div>
<div style="position:absolute;left:609px;top:504px;width:59px;height:19px;overflow:hidden;"><div class="t" style="left:1.5px;top:3.69px;font-size:11px;line-height:13px;color:#1a0000;transform:scaleX(1.0);transform-origin:0 0">Átutalás</div></div>
<div style="position:absolute;left:669px;top:504px;width:37px;height:19px;overflow:hidden;"><div class="t" style="left:1.5px;top:3.69px;font-size:11px;line-height:13px;color:#1a0000;transform:scaleX(1.0);transform-origin:0 0">TESZT</div></div>
<div style="position:absolute;left:798px;top:504px;width:19px;height:19px;overflow:hidden;"><div class="t" style="right:1.5px;top:3.69px;font-size:11px;line-height:13px;color:#1a0000;transform:scaleX(1.0);transform-origin:0 0">0</div></div>
<div style="position:absolute;left:818px;top:504px;width:19px;height:19px;overflow:hidden;"><div class="t" style="right:1.5px;top:3.69px;font-size:11px;line-height:13px;color:#1a0000;transform:scaleX(1.0);transform-origin:0 0">0</div></div>
<div style="position:absolute;left:838px;top:504px;width:19px;height:19px;overflow:hidden;"><div class="t" style="left:1.5px;top:3.69px;font-size:11px;line-height:13px;color:#1a0000;transform:scaleX(1.0);transform-origin:0 0">5 0</div></div>
<div style="position:absolute;left:858px;top:504px;width:19px;height:19px;overflow:hidden;"><div class="t" style="right:1.5px;top:3.69px;font-size:11px;line-height:13px;color:#1a0000;transform:scaleX(1.0);transform-origin:0 0">0</div></div>
<div style="position:absolute;left:878px;top:504px;width:19px;height:19px;overflow:hidden;"><div class="t" style="right:1.5px;top:3.69px;font-size:11px;line-height:13px;color:#1a0000;transform:scaleX(1.0);transform-origin:0 0">0</div></div>
<div style="position:absolute;left:898px;top:504px;width:19px;height:19px;overflow:hidden;"><div class="t" style="left:1.5px;top:3.69px;font-size:11px;line-height:13px;color:#1a0000;transform:scaleX(1.0);transform-origin:0 0">5 0</div></div>
<div style="position:absolute;left:918px;top:504px;width:19px;height:19px;overflow:hidden;"><div class="t" style="right:1.5px;top:3.69px;font-size:11px;line-height:13px;color:#1a0000;transform:scaleX(1.0);transform-origin:0 0">0</div></div>
<div style="position:absolute;left:938px;top:504px;width:19px;height:19px;overflow:hidden;"><div class="t" style="right:1.5px;top:3.69px;font-size:11px;line-height:13px;color:#1a0000;transform:scaleX(1.0);transform-origin:0 0">0</div></div>
<div style="position:absolute;left:958px;top:504px;width:19px;height:19px;overflow:hidden;"><div class="t" style="left:1.5px;top:3.69px;font-size:11px;line-height:13px;color:#1a0000;transform:scaleX(1.0);transform-origin:0 0">Ft</div></div>
<div style="position:absolute;left:981px;top:507px;width:13px;height:13px;background:#fff;border:1px solid #d2ecd2;box-sizing:border-box"></div>
<div style="position:absolute;left:1159px;top:343px;width:1px;height:181px;background:#dce2e6"></div>
<div style="position:absolute;left:155px;top:384px;width:1px;height:140px;background:#dcdcdc"></div>
<div style="position:absolute;left:289px;top:384px;width:1px;height:140px;background:#dcdcdc"></div>
<div style="position:absolute;left:356px;top:384px;width:1px;height:140px;background:#dcdcdc"></div>
<div style="position:absolute;left:421px;top:384px;width:1px;height:140px;background:#dcdcdc"></div>
<div style="position:absolute;left:488px;top:384px;width:1px;height:140px;background:#dcdcdc"></div>
<div style="position:absolute;left:555px;top:384px;width:1px;height:140px;background:#dcdcdc"></div>
<div style="position:absolute;left:608px;top:384px;width:1px;height:140px;background:#dcdcdc"></div>
<div style="position:absolute;left:668px;top:384px;width:1px;height:140px;background:#dcdcdc"></div>
<div style="position:absolute;left:706px;top:384px;width:1px;height:140px;background:#dcdcdc"></div>
<div style="position:absolute;left:797px;top:384px;width:1px;height:140px;background:#dcdcdc"></div>
<div style="position:absolute;left:817px;top:384px;width:1px;height:140px;background:#dcdcdc"></div>
<div style="position:absolute;left:837px;top:384px;width:1px;height:140px;background:#dcdcdc"></div>
<div style="position:absolute;left:857px;top:384px;width:1px;height:140px;background:#dcdcdc"></div>
<div style="position:absolute;left:877px;top:384px;width:1px;height:140px;background:#dcdcdc"></div>
<div style="position:absolute;left:897px;top:384px;width:1px;height:140px;background:#dcdcdc"></div>
<div style="position:absolute;left:917px;top:384px;width:1px;height:140px;background:#dcdcdc"></div>
<div style="position:absolute;left:937px;top:384px;width:1px;height:140px;background:#dcdcdc"></div>
<div style="position:absolute;left:957px;top:384px;width:1px;height:140px;background:#dcdcdc"></div>
<div style="position:absolute;left:977px;top:384px;width:1px;height:140px;background:#dcdcdc"></div>
<div style="position:absolute;left:997px;top:384px;width:1px;height:140px;background:#dcdcdc"></div>
<div style="position:absolute;left:1081px;top:384px;width:1px;height:140px;background:#dcdcdc"></div>
<div style="position:absolute;left:1104px;top:384px;width:1px;height:140px;background:#dcdcdc"></div>
<div style="position:absolute;left:18px;top:384px;width:1px;height:140px;background:#d2d5e2"></div>
<div style="position:absolute;left:19px;top:384px;width:1140px;height:19px;box-sizing:border-box;border:1px dotted #40ffff"></div>
<svg style="position:absolute;left:10px;top:389px" width="6" height="9" viewBox="0 0 6 9"><path d="M1 0.8L5 4.5L1 8.2Z" fill="#6e6e6e"/></svg>
<div style="position:absolute;left:6px;top:697px;width:1155px;height:1px;background:#d6d6d6"></div>
<div style="position:absolute;left:6px;top:698px;width:49px;height:21px;background:#e2e2e2;border:1px solid #a8a8a8;box-sizing:border-box"></div>
<div class="t" style="left:9.5px;top:701.02px;font-size:11.5px;line-height:14px;color:#000;transform:scaleX(0.9273);transform-origin:0 0;">Ft</div>
<svg style="position:absolute;left:41px;top:705px" width="10" height="8" viewBox="0 0 10 8"><path d="M1 1.6L5 5.6L9 1.6" fill="none" stroke="#505050" stroke-width="1.1"/></svg>
<div class="t" style="left:62.1px;top:706.69px;font-size:11px;line-height:13px;color:#000;transform:scaleX(0.9864);transform-origin:0 0;">Tartozás összesen: 0 Ft; Rendezve összesen: 0 Ft; Egyenleg: 0 Ft</div>
<div class="t" style="left:62.1px;top:727.69px;font-size:11px;line-height:13px;color:#000;transform:scaleX(0.9797);transform-origin:0 0;">Követelés összesen: 174 350 Ft; Rendezve összesen: 51 000 Ft; Leírva összesen: 0 Ft; Egyenleg: 123 350 Ft</div>
<div style="position:absolute;left:4px;top:745px;width:1159px;height:1px;background:#dcdcdc"></div>
<div style="position:absolute;left:4px;top:746px;width:1159px;height:1px;background:#eeeeee"></div>
<div style="position:absolute;left:4px;top:747px;width:1159px;height:1px;background:#d2d2d2"></div>
<div style="position:absolute;left:4px;top:748px;width:1159px;height:18px;background:#f0f0f0"></div>
<div style="position:absolute;left:3px;top:766px;width:1161px;height:1px;background:#b4b4b4"></div>
<div class="t" style="left:5.9px;top:750.84px;font-size:12px;line-height:14px;color:#000;transform:scaleX(0.9427);transform-origin:0 0;">TAB - Mezőváltás; F1 - Súgó; F2 - Törzs; ENTER - Befizetés, átutalás rögzítése; INS - Megbízási csomaghoz rendelés; F9 - Sor/mező kijelölése; ESC - Bezár</div>
<div style="position:absolute;left:1159px;top:756px;width:2px;height:2px;background:#a8a8a8"></div>
<div style="position:absolute;left:1156px;top:759px;width:2px;height:2px;background:#a8a8a8"></div>
<div style="position:absolute;left:1159px;top:759px;width:2px;height:2px;background:#a8a8a8"></div>
<div style="position:absolute;left:1153px;top:762px;width:2px;height:2px;background:#a8a8a8"></div>
<div style="position:absolute;left:1156px;top:762px;width:2px;height:2px;background:#a8a8a8"></div>
<div style="position:absolute;left:1159px;top:762px;width:2px;height:2px;background:#a8a8a8"></div>
</body></html>
